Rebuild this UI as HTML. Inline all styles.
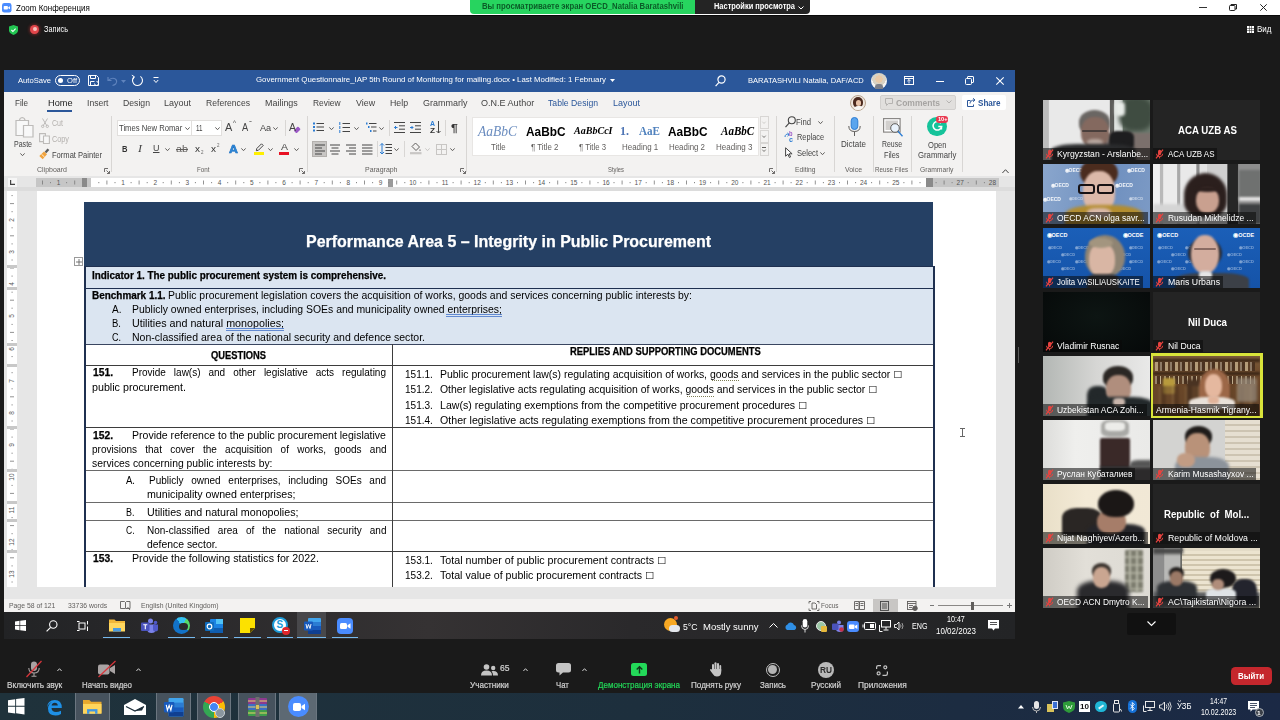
<!DOCTYPE html>
<html lang="ru">
<head>
<meta charset="utf-8">
<title>Zoom Конференция</title>
<style>
*{margin:0;padding:0;box-sizing:border-box}
html,body{width:1280px;height:720px;overflow:hidden;background:#1a1a1a}
body{font-family:"Liberation Sans",sans-serif;font-size:10px;color:#000;position:relative}
.a{position:absolute;white-space:pre}
.t{position:absolute;white-space:pre;line-height:14px;height:14px;transform-origin:0 50%}
.b{font-weight:bold}
svg{position:absolute;overflow:visible}
.bb{-webkit-text-stroke:.25px currentColor}
.cb{font-family:"DejaVu Sans",sans-serif;font-size:9.500px;line-height:0;position:relative;top:-.5px}
/* zoom chrome */
#ztitle{left:0;top:0;width:1280px;height:15px;background:#fff}
#zline{left:0;top:15px;width:1280px;height:1px;background:#0a0a0a}
#zgreen{left:470px;top:0;width:226px;height:14px;background:#27d45f;border-radius:0 0 0 4px}
#zdark{left:695px;top:0;width:115px;height:14px;background:#242424;border-radius:0 0 4px 0}
/* word window (global coords) */
#wtitle{left:4px;top:70px;width:1011px;height:22px;background:#2b579a}
#wtabs{left:4px;top:92px;width:1011px;height:21px;background:#f3f2f1}
#wribbon{left:4px;top:113px;width:1011px;height:63px;background:#f3f2f1}
#wruler{left:4px;top:176px;width:1011px;height:15px;background:#e6e6e6}
#wdoc{left:4px;top:191px;width:1011px;height:408px;background:#e6e6e6}
#wpage{left:37px;top:191px;width:959px;height:396px;background:#fff}
#wstatus{left:4px;top:599px;width:1011px;height:13px;background:#f3f2f1}
#wtask{left:4px;top:612px;width:1011px;height:27px;background:linear-gradient(90deg,#222325 0,#2b2a2c 20%,#353233 42%,#2a292b 62%,#232426 100%)}
/* bottom */
#ztool{left:0;top:645px;width:1280px;height:48px;background:#1a1a1a}
#wintask{left:0;top:692.500px;width:1280px;height:28px;background:linear-gradient(90deg,#1f323b 0,#1d2f3d 50%,#1b2945 100%)}
</style>
</head>
<body>
<!-- ZOOM TITLE BAR -->
<div class="a" id="ztitle"></div>
<div class="a" id="zline"></div>
<div class="a" id="zgreen"></div>
<div class="a" id="zdark"></div>
<!-- ztitle -->
<svg style="left:2px;top:3px" width="9.500" height="9.500" viewBox="0 0 10 10"><rect width="10" height="10" rx="2.500" fill="#4a8cff"/><rect x="1.800" y="3.200" width="4.400" height="3.600" rx=".8" fill="#fff"/><path d="M6.600 4.600l1.800-1.200v3.200L6.600 5.400z" fill="#fff"/></svg>
<svg style="left:798px;top:5.500px" width="6" height="4" viewBox="0 0 6 4" fill="none" stroke="#fff" stroke-width="1"><path d="M.500.500l2.500 2.500L5.500.500"/></svg>
<div class="a" style="left:1198.500px;top:6.500px;width:8px;height:1px;background:#333"></div>
<svg style="left:1229px;top:3.500px" width="8" height="7" viewBox="0 0 8 7" fill="none" stroke="#222" stroke-width="1"><rect x=".5" y="1.500" width="5.500" height="5" rx=".8"/><path d="M2 1.500v-1h5.500v4.500h-1.500"/></svg>
<svg style="left:1260px;top:3.500px" width="7" height="7" viewBox="0 0 7 7" stroke="#222" stroke-width="1"><path d="M.300.300l6.400 6.400M6.700.300L.300 6.700"/></svg>
<svg style="left:9px;top:24.500px" width="9" height="10" viewBox="0 0 9 10"><path d="M4.500 0L9 1.500v3.800Q9 8.200 4.500 10 0 8.200 0 5.300V1.500z" fill="#23c552"/><path d="M2.400 5l1.500 1.500L6.600 3.600" stroke="#fff" stroke-width="1.100" fill="none"/></svg>
<div class="a" style="left:30px;top:24.500px;width:9px;height:9px;border-radius:5px;background:#e2464b;box-shadow:0 0 3px 1px rgba(200,50,50,.45)"></div>
<div class="a" style="left:32.500px;top:27px;width:4px;height:4px;border-radius:2px;background:#f6c0bd"></div>
<svg style="left:1247px;top:25.500px" width="7" height="7" viewBox="0 0 7 7" fill="#fff"><path d="M0 0h2v2H0zM2.500 0h2v2h-2zM5 0h2v2H5zM0 2.500h2v2H0zM2.500 2.500h2v2h-2zM5 2.500h2v2H5zM0 5h2v2H0zM2.500 5h2v2h-2zM5 5h2v2H5z"/></svg>
<div class="t" style="left:15.5px;top:0.8px;font-size:9.6px;transform:scaleX(0.8323);color:#000;">Zoom Конференция</div>
<div class="t b" style="left:481.5px;top:0.0px;font-size:8.2px;transform:scaleX(0.9459);color:#0b5c27;">Вы просматриваете экран OECD_Natalia Baratashvili</div>
<div class="t b" style="left:714px;top:0.0px;font-size:8.2px;transform:scaleX(0.9082);color:#fff;">Настройки просмотра</div>
<div class="t" style="left:44px;top:22.0px;font-size:8.4px;transform:scaleX(0.8732);color:#fff;">Запись</div>
<div class="t" style="left:1257px;top:22.0px;font-size:8.4px;transform:scaleX(0.9567);color:#fff;">Вид</div>

<!-- WORD WINDOW (shared screen) -->
<div class="a" id="wtitle"></div>
<div class="a" id="wtabs"></div>
<div class="a" id="wribbon"></div>
<div class="a" id="wruler"></div>
<div class="a" id="wdoc"></div>
<div class="a" id="wpage"></div>
<!-- wtitle -->
<div class="t" style="left:18px;top:73.5px;font-size:8px;transform:scaleX(0.9509);color:#fff;">AutoSave</div>
<div class="t" style="left:66.5px;top:73.5px;font-size:6.5px;transform:scaleX(1.1679);color:#fff;">Off</div>
<div class="t" style="left:255.6px;top:73.3px;font-size:8px;transform:scaleX(0.9802);color:#fff;">Government Questionnaire_IAP 5th Round of Monitoring for mailing.docx • Last Modified: 1 February</div>
<div class="t" style="left:748px;top:74.0px;font-size:8px;transform:scaleX(0.9425);color:#fff;">BARATASHVILI Natalia, DAF/ACD</div>
<div class="a" style="left:55px;top:75px;width:25px;height:11px;border:1px solid #fff;border-radius:6px"></div>
<div class="a" style="left:58px;top:78px;width:5px;height:5px;border-radius:3px;background:#fff"></div>
<svg style="left:88px;top:75px" width="11" height="11" viewBox="0 0 11 11" fill="none" stroke="#fff" stroke-width="1"><path d="M.5.5h8l2 2v8h-10z"/><path d="M2.5.5v3h5v-3M2.5 10.500v-4h4"/><path d="M6.500 8.500a2 2 0 1 0 2-2" stroke-width=".9"/></svg>
<svg style="left:107px;top:76px" width="11" height="10" viewBox="0 0 11 10" fill="none" stroke="#5f83bd" stroke-width="1.2"><path d="M1 1v3.500h3.500M1.500 4.500c2-3 7-3 8 0s-2 4.500-4 5"/></svg>
<svg style="left:121px;top:80px" width="5" height="3" viewBox="0 0 5 3"><path d="M0 0h5l-2.500 3z" fill="#5f83bd"/></svg>
<svg style="left:131px;top:74px" width="13" height="13" viewBox="0 0 13 13" fill="none" stroke="#fff" stroke-width="1.1"><path d="M3.200 2.700a5 5 0 1 0 6.200-.3"/><path d="M.800 1.200l2.500 1.500-1.300 2.600" stroke-width="1"/></svg>
<svg style="left:153px;top:77px" width="6" height="7" viewBox="0 0 6 7" fill="none" stroke="#fff" stroke-width="1"><path d="M.500.500h5M.800 3l2.200 2.500L5.200 3"/></svg>
<svg style="left:610px;top:79px" width="5" height="3" viewBox="0 0 5 3"><path d="M0 0h5l-2.500 3z" fill="#fff"/></svg>
<svg style="left:715px;top:75px" width="11" height="12" viewBox="0 0 11 12" fill="none" stroke="#fff" stroke-width="1.2"><circle cx="6.500" cy="4.500" r="3.600"/><path d="M4 7.300L.600 11.200"/></svg>
<div class="a" style="left:871px;top:73px;width:16px;height:16px;border-radius:8px;background:radial-gradient(circle at 50% 38%,#e8c9a8 0 28%,#d8d2c4 30% 52%,#f4f4f4 54%);"></div>
<div class="a" style="left:875px;top:84px;width:8px;height:5px;border-radius:3px 3px 0 0;background:#7b7f8a"></div>
<svg style="left:904px;top:76px" width="10" height="9" viewBox="0 0 10 9" fill="none" stroke="#fff" stroke-width="1"><rect x=".5" y=".5" width="9" height="8"/><path d="M.5 2.500h9"/><path d="M5 3.500v4M3.300 5.200L5 3.500l1.700 1.700" stroke-width=".9"/></svg>
<div class="a" style="left:936px;top:81px;width:8px;height:1px;background:#fff"></div>
<svg style="left:965px;top:76px" width="9" height="9" viewBox="0 0 9 9" fill="none" stroke="#fff" stroke-width="1"><rect x=".5" y="2.500" width="6" height="6" rx="1"/><path d="M2.500 2.500v-1.500q0-.5.5-.5h5q.5 0 .5.500v5q0 .5-.5.500h-1.500"/></svg>
<svg style="left:996px;top:77px" width="8" height="8" viewBox="0 0 8 8" stroke="#fff" stroke-width="1.1"><path d="M.300.300l7.400 7.400M7.700.300L.300 7.700"/></svg>

<!-- wtabs -->
<div class="a" style="left:47px;top:110px;width:25px;height:2px;background:#2b579a"></div>
<div class="a" style="left:880px;top:95px;width:76px;height:15px;background:#e1dfdd;border:1px solid #d2d0ce;border-radius:2px"></div>
<div class="a" style="left:962px;top:95px;width:44px;height:15px;background:#fff;border-radius:2px"></div>
<svg style="left:885px;top:98px" width="8" height="8" viewBox="0 0 8 8" fill="none" stroke="#b5b3b1" stroke-width="1"><path d="M.5.500h7v5h-4l-2 2v-2h-1z"/></svg>
<svg style="left:946px;top:100px" width="6" height="4" viewBox="0 0 6 4" fill="none" stroke="#b5b3b1" stroke-width="1"><path d="M.500.500l2.500 2.500L5.500.500"/></svg>
<svg style="left:967px;top:98px" width="9" height="9" viewBox="0 0 9 9" fill="none" stroke="#2b579a" stroke-width="1"><path d="M3.500 2.500h-3v6h6v-2M3 5.500c0-2 1.500-3.500 4.500-3.500M6 .300l2 1.700-2 1.700"/></svg>
<div class="a" style="left:850px;top:95px;width:16px;height:16px;border-radius:8px;background:#efe7de;border:1px solid #b9a58f;overflow:hidden"><div class="a" style="left:2px;top:1px;width:10px;height:11px;border-radius:5px;background:#4b2a1e"></div><div class="a" style="left:5px;top:3.500px;width:5px;height:6px;border-radius:3px;background:#e7c2a8"></div><div class="a" style="left:2.500px;top:10px;width:10px;height:6px;border-radius:4px 4px 0 0;background:#f7f5f2"></div></div>
<div class="t" style="left:15px;top:95.5px;font-size:9.4px;transform:scaleX(0.8604);color:#444;">File</div>
<div class="t" style="left:47.5px;top:95.5px;font-size:9.4px;transform:scaleX(0.9794);color:#222;">Home</div>
<div class="t" style="left:86.5px;top:95.5px;font-size:9.4px;transform:scaleX(0.9167);color:#444;">Insert</div>
<div class="t" style="left:123px;top:95.5px;font-size:9.4px;transform:scaleX(0.9251);color:#444;">Design</div>
<div class="t" style="left:164px;top:95.5px;font-size:9.4px;transform:scaleX(0.9589);color:#444;">Layout</div>
<div class="t" style="left:206px;top:95.5px;font-size:9.4px;transform:scaleX(0.9176);color:#444;">References</div>
<div class="t" style="left:265px;top:95.5px;font-size:9.4px;transform:scaleX(0.9537);color:#444;">Mailings</div>
<div class="t" style="left:313px;top:95.5px;font-size:9.4px;transform:scaleX(0.8976);color:#444;">Review</div>
<div class="t" style="left:355.6px;top:95.5px;font-size:9.4px;transform:scaleX(0.9476);color:#444;">View</div>
<div class="t" style="left:389.7px;top:95.5px;font-size:9.4px;transform:scaleX(0.9387);color:#444;">Help</div>
<div class="t" style="left:422.5px;top:95.5px;font-size:9.4px;transform:scaleX(0.9577);color:#444;">Grammarly</div>
<div class="t" style="left:480.6px;top:95.5px;font-size:9.4px;transform:scaleX(0.9632);color:#444;">O.N.E Author</div>
<div class="t" style="left:548px;top:95.5px;font-size:9.4px;transform:scaleX(0.9225);color:#2b579a;">Table Design</div>
<div class="t" style="left:613px;top:95.5px;font-size:9.4px;transform:scaleX(0.9589);color:#2b579a;">Layout</div>
<div class="t b" style="left:896px;top:95.5px;font-size:9.5px;transform:scaleX(0.8962);color:#a6a4a2;">Comments</div>
<div class="t b" style="left:978px;top:95.5px;font-size:9.5px;transform:scaleX(0.8521);color:#2b579a;">Share</div>

<!-- wribbon -->
<svg style="left:15px;top:117px" width="19" height="21" viewBox="0 0 19 21" fill="#f8f8f8" stroke="#bdbbb9" stroke-width="1.2"><path d="M1 3.500h12.500v15H1z"/><path d="M4.500 3.500q0-2.500 2.700-3 2.800.5 2.800 3z" fill="#f3f2f1"/><path d="M8.500 8.500h9.500v11.500H8.500z"/></svg>
<svg style="left:20.0px;top:152.5px" width="5" height="3.500" viewBox="0 0 5 3.500" fill="none" stroke="#605e5c" stroke-width="1"><path d="M.400.400l2.100 2.300L4.600.400"/></svg>
<svg style="left:41px;top:118px" width="8" height="10" viewBox="0 0 8 10" fill="none" stroke="#bdbbb9" stroke-width="1"><path d="M1.500.500L6 8M6.500.500L2 8"/><circle cx="1.700" cy="8.300" r="1.200"/><circle cx="6.300" cy="8.300" r="1.200"/></svg>
<svg style="left:39px;top:133px" width="11" height="11" viewBox="0 0 11 11" fill="#f6f6f6" stroke="#bdbbb9" stroke-width="1.100"><path d="M.600.600h5.800v8H.600z"/><path d="M4.500 3h5.900v7.500H4.500z"/></svg>
<svg style="left:39px;top:148px" width="11" height="12" viewBox="0 0 11 12"><path d="M8.500.500l1.800 1.600-3 3.200-1.600-1.500z" fill="#5c5c5c"/><path d="M5 3.500l3 2.800-4.300 5L.300 8z" fill="#f0a33e"/><path d="M2.500 6.200l3 2.800" stroke="#fff" stroke-width=".8"/></svg>
<svg style="left:104px;top:168px" width="6" height="6" viewBox="0 0 6 6" fill="none" stroke="#605e5c" stroke-width=".9"><path d="M.500 4v-3.500h3.500M2.500 2.500l3 3M5.500 3v2.500h-2.500"/></svg>
<div class="a" style="left:111px;top:116px;width:1px;height:56px;background:#d8d6d4"></div>
<div class="a" style="left:117px;top:120px;width:75px;height:16px;background:#fff;border:1px solid #e1dfdd"></div>
<div class="a" style="left:192px;top:120px;width:30px;height:16px;background:#fff;border:1px solid #e1dfdd;border-left:0"></div>
<svg style="left:184.5px;top:127.0px" width="5" height="3.500" viewBox="0 0 5 3.500" fill="none" stroke="#605e5c" stroke-width="1"><path d="M.400.400l2.100 2.300L4.600.400"/></svg>
<svg style="left:214.5px;top:127.0px" width="5" height="3.500" viewBox="0 0 5 3.500" fill="none" stroke="#605e5c" stroke-width="1"><path d="M.400.400l2.100 2.300L4.600.400"/></svg>
<svg style="left:164.5px;top:147.5px" width="5" height="3.500" viewBox="0 0 5 3.500" fill="none" stroke="#605e5c" stroke-width="1"><path d="M.400.400l2.100 2.300L4.600.400"/></svg>
<svg style="left:272.5px;top:127.0px" width="5" height="3.500" viewBox="0 0 5 3.500" fill="none" stroke="#605e5c" stroke-width="1"><path d="M.400.400l2.100 2.300L4.600.400"/></svg>
<div class="a" style="left:284.6px;top:120px;width:1px;height:16px;background:#d8d6d4"></div>
<div class="a" style="left:294px;top:128px;width:6px;height:3.500px;background:#9b59c6;transform:rotate(-45deg);border-radius:1px"></div>
<svg style="left:240.5px;top:147.5px" width="5" height="3.500" viewBox="0 0 5 3.500" fill="none" stroke="#605e5c" stroke-width="1"><path d="M.400.400l2.100 2.300L4.600.400"/></svg>
<svg style="left:267.5px;top:147.5px" width="5" height="3.500" viewBox="0 0 5 3.500" fill="none" stroke="#605e5c" stroke-width="1"><path d="M.400.400l2.100 2.300L4.600.400"/></svg>
<svg style="left:293.5px;top:147.5px" width="5" height="3.500" viewBox="0 0 5 3.500" fill="none" stroke="#605e5c" stroke-width="1"><path d="M.400.400l2.100 2.300L4.600.400"/></svg>
<div class="a" style="left:253.5px;top:151.500px;width:10.500px;height:3.500px;background:#ffef00"></div>
<svg style="left:255px;top:143px" width="9" height="9" viewBox="0 0 9 9" fill="none" stroke="#444" stroke-width="1"><path d="M6.500.800l1.700 1.700-4.700 4.700-2.200.500.500-2.200z"/></svg>
<div class="a" style="left:279px;top:151.500px;width:10px;height:3px;background:#e81123"></div>
<svg style="left:299px;top:168px" width="6" height="6" viewBox="0 0 6 6" fill="none" stroke="#605e5c" stroke-width=".9"><path d="M.500 4v-3.500h3.500M2.500 2.500l3 3M5.500 3v2.500h-2.500"/></svg>
<div class="a" style="left:306.5px;top:116px;width:1px;height:56px;background:#d8d6d4"></div>
<svg style="left:313.3px;top:122.3px" width="11" height="10" viewBox="0 0 11 10"><path d="M0 .5h2v2H0zM0 4h2v2H0zM0 7.500h2v2H0z" fill="#2b7cd3"/><path d="M3.500 1.500H11M3.500 5H11M3.500 8.500H11" stroke="#444" stroke-width="1"/></svg>
<svg style="left:328.5px;top:126.5px" width="5" height="3.500" viewBox="0 0 5 3.500" fill="none" stroke="#605e5c" stroke-width="1"><path d="M.400.400l2.100 2.300L4.600.400"/></svg>
<svg style="left:339px;top:122px" width="11" height="11" viewBox="0 0 11 11"><path d="M.8 0v3M.8 4v3M.8 8v3" stroke="#2b7cd3" stroke-width="1"/><path d="M3.500 1.500H11M3.500 5.500H11M3.500 9.500H11" stroke="#444" stroke-width="1"/></svg>
<svg style="left:354.0px;top:126.5px" width="5" height="3.500" viewBox="0 0 5 3.500" fill="none" stroke="#605e5c" stroke-width="1"><path d="M.400.400l2.100 2.300L4.600.400"/></svg>
<svg style="left:365.500px;top:122px" width="11" height="11" viewBox="0 0 11 11"><path d="M0 .5h1.500v2H0zM2 4h1.500v2H2zM4 8h1.500v2H4z" fill="#2b7cd3"/><path d="M3 1.500H10.500M5 5H10.500M7 9H10.500" stroke="#444" stroke-width="1"/></svg>
<svg style="left:378.5px;top:126.5px" width="5" height="3.500" viewBox="0 0 5 3.500" fill="none" stroke="#605e5c" stroke-width="1"><path d="M.400.400l2.100 2.300L4.600.400"/></svg>
<div class="a" style="left:389px;top:120px;width:1px;height:16px;background:#d8d6d4"></div>
<svg style="left:394.300px;top:122px" width="11" height="11" viewBox="0 0 11 11"><path d="M0 .5H11M5 3.800H11M5 7.200H11M0 10.500H11" stroke="#444" stroke-width="1"/><path d="M3.500 5.500H.500M2 4L.5 5.500 2 7" stroke="#2b7cd3" fill="none" stroke-width="1"/></svg>
<svg style="left:410px;top:122px" width="11" height="11" viewBox="0 0 11 11"><path d="M0 .5H11M5 3.800H11M5 7.200H11M0 10.500H11" stroke="#444" stroke-width="1"/><path d="M0 5.500H3M1.500 4L3 5.500 1.500 7" stroke="#2b7cd3" fill="none" stroke-width="1"/></svg>
<svg style="left:436px;top:120.500px" width="5" height="13" viewBox="0 0 5 13" fill="none" stroke="#444" stroke-width="1"><path d="M2.500 0v12M.500 10l2 2 2-2"/></svg>
<div class="a" style="left:445px;top:120px;width:1px;height:16px;background:#d8d6d4"></div>
<div class="a" style="left:312px;top:141px;width:15px;height:16px;background:#c8c6c4;border:1px solid #b3b0ad"></div>
<svg style="left:314.5px;top:143.5px" width="14" height="12" viewBox="0 0 14 12" fill="none" stroke="#444" stroke-width="1"><path d="M0 1H10M0 4H7M0 7H10M0 10H7"/></svg>
<svg style="left:330px;top:143.5px" width="14" height="12" viewBox="0 0 14 12" fill="none" stroke="#444" stroke-width="1"><path d="M0 1H10M1.5 4H8.5M0 7H10M1.5 10H8.5"/></svg>
<svg style="left:346px;top:143.5px" width="14" height="12" viewBox="0 0 14 12" fill="none" stroke="#444" stroke-width="1"><path d="M0 1H10M3 4H10M0 7H10M3 10H10"/></svg>
<svg style="left:361.5px;top:143.5px" width="14" height="12" viewBox="0 0 14 12" fill="none" stroke="#444" stroke-width="1"><path d="M0 1H10.5M0 4H10.5M0 7H10.5M0 10H10.5"/></svg>
<div class="a" style="left:377px;top:141px;width:1px;height:16px;background:#d8d6d4"></div>
<svg style="left:380px;top:143px" width="12" height="12" viewBox="0 0 12 12" fill="none"><path d="M2 .5v10.500M0 2.500l2-2 2 2M0 9l2 2 2-2" stroke="#2b7cd3" stroke-width="1"/><path d="M5.500 1.500H12M5.500 4.500H12M5.500 7.500H12M5.500 10.500H12" stroke="#444" stroke-width="1"/></svg>
<svg style="left:393.5px;top:147.5px" width="5" height="3.500" viewBox="0 0 5 3.500" fill="none" stroke="#605e5c" stroke-width="1"><path d="M.400.400l2.100 2.300L4.600.400"/></svg>
<div class="a" style="left:404px;top:141px;width:1px;height:16px;background:#d8d6d4"></div>
<svg style="left:409.500px;top:142px" width="12" height="13" viewBox="0 0 12 13" fill="none"><path d="M5.500 1l4 4-3.500 3.500-4-4z" stroke="#605e5c" stroke-width="1" fill="#f3f2f1"/><path d="M10 7q1.200 1.600 0 2.200-1.200-.6 0-2.200z" fill="#605e5c"/><path d="M0 11.200h11.500" stroke="#c8c6c4" stroke-width="2.200"/></svg>
<svg style="left:424.5px;top:147.5px" width="5" height="3.500" viewBox="0 0 5 3.500" fill="none" stroke="#c8c6c4" stroke-width="1"><path d="M.400.400l2.100 2.300L4.600.400"/></svg>
<svg style="left:435.500px;top:143.500px" width="11" height="11" viewBox="0 0 11 11" fill="none" stroke="#c8c6c4" stroke-width="1"><rect x=".5" y=".5" width="10" height="10"/><path d="M5.500.500v10M.500 5.500h10"/></svg>
<svg style="left:450.0px;top:147.5px" width="5" height="3.500" viewBox="0 0 5 3.500" fill="none" stroke="#605e5c" stroke-width="1"><path d="M.400.400l2.100 2.300L4.600.400"/></svg>
<svg style="left:460px;top:168px" width="6" height="6" viewBox="0 0 6 6" fill="none" stroke="#605e5c" stroke-width=".9"><path d="M.500 4v-3.500h3.500M2.500 2.500l3 3M5.500 3v2.500h-2.500"/></svg>
<div class="a" style="left:466.3px;top:116px;width:1px;height:56px;background:#d8d6d4"></div>
<div class="a" style="left:472px;top:117px;width:287px;height:38.500px;background:#fff;border:1px solid #e8e6e4"></div>
<div class="a" style="left:759.500px;top:116px;width:9px;height:13px;background:#f3f2f1;border:1px solid #d8d6d4"></div>
<div class="a" style="left:759.500px;top:129.5px;width:9px;height:13px;background:#f3f2f1;border:1px solid #d8d6d4"></div>
<div class="a" style="left:759.500px;top:143px;width:9px;height:13px;background:#f3f2f1;border:1px solid #d8d6d4"></div>
<svg style="left:762.0px;top:121.0px" width="4" height="3.500" viewBox="0 0 5 3.500" fill="none" stroke="#c8c6c4" stroke-width="1"><path d="M.400.400l2.100 2.300L4.600.400"/></svg>
<svg style="left:762.0px;top:134.5px" width="4" height="3.500" viewBox="0 0 5 3.500" fill="none" stroke="#605e5c" stroke-width="1"><path d="M.400.400l2.100 2.300L4.600.400"/></svg>
<svg style="left:762.0px;top:149.0px" width="4" height="3.500" viewBox="0 0 5 3.500" fill="none" stroke="#605e5c" stroke-width="1"><path d="M.400.400l2.100 2.300L4.600.400"/></svg>
<div class="a" style="left:762px;top:146.500px;width:4px;height:1px;background:#605e5c"></div>
<svg style="left:769px;top:168px" width="6" height="6" viewBox="0 0 6 6" fill="none" stroke="#605e5c" stroke-width=".9"><path d="M.500 4v-3.500h3.500M2.500 2.500l3 3M5.500 3v2.500h-2.500"/></svg>
<div class="a" style="left:775.8px;top:116px;width:1px;height:56px;background:#d8d6d4"></div>
<svg style="left:784.500px;top:116px" width="11" height="12" viewBox="0 0 11 12" fill="none" stroke="#444" stroke-width="1.100"><circle cx="6.800" cy="4.200" r="3.500"/><path d="M4.300 6.900L.500 11.200"/></svg>
<svg style="left:817.5px;top:121.0px" width="5" height="3.500" viewBox="0 0 5 3.500" fill="none" stroke="#605e5c" stroke-width="1"><path d="M.400.400l2.100 2.300L4.600.400"/></svg>
<svg style="left:820.0px;top:151.5px" width="5" height="3.500" viewBox="0 0 5 3.500" fill="none" stroke="#605e5c" stroke-width="1"><path d="M.400.400l2.100 2.300L4.600.400"/></svg>
<svg style="left:784px;top:132px" width="11" height="11" viewBox="0 0 11 11" fill="none"><path d="M1 5c0-2.500 2-3.500 4-2.500M3.500 1l1.700 1.600-1.700 1.600" stroke="#2b7cd3" stroke-width="1"/></svg>
<svg style="left:785px;top:147px" width="8" height="11" viewBox="0 0 8 11" fill="#fff" stroke="#444" stroke-width="1"><path d="M.600.800v8.400l2.300-2 1.500 3.300 1.200-.6-1.500-3.100h3z"/></svg>
<div class="a" style="left:834px;top:116px;width:1px;height:56px;background:#d8d6d4"></div>
<svg style="left:847.500px;top:117px" width="13" height="20" viewBox="0 0 13 20" fill="none"><rect x="3.200" y=".5" width="6.600" height="12" rx="3.300" fill="#5aa5ee" stroke="#2b7cd3" stroke-width="1"/><path d="M.800 9q0 5.500 5.700 5.500T12.200 9M6.500 14.500v4.500" stroke="#605e5c" stroke-width="1"/></svg>
<div class="a" style="left:872.5px;top:116px;width:1px;height:56px;background:#d8d6d4"></div>
<svg style="left:882.500px;top:118px" width="21" height="20" viewBox="0 0 21 20" fill="none"><rect x=".6" y=".6" width="16.500" height="13.500" stroke="#8a8886" stroke-width="1.200" fill="#fff"/><rect x="2.500" y="2.500" width="12.500" height="9.500" fill="#d2d0ce"/><circle cx="12" cy="10" r="4.300" fill="#eaf3fc" stroke="#605e5c" stroke-width="1"/><path d="M15 13.300l4.500 5" stroke="#2b7cd3" stroke-width="1.300"/></svg>
<div class="a" style="left:911px;top:116px;width:1px;height:56px;background:#d8d6d4"></div>
<div class="a" style="left:927px;top:116.500px;width:19.500px;height:19.500px;border-radius:10px;background:#15c39a"></div>
<svg style="left:930.500px;top:120px" width="12" height="12" viewBox="0 0 12 12" fill="none" stroke="#fff" stroke-width="1.500"><path d="M9.800 3.200a4.300 4.300 0 1 0 .8 3.300h-3.300"/><path d="M10.600 6.500v3" stroke-width="1.200"/></svg>
<div class="a" style="left:936px;top:116px;width:12px;height:6.500px;border-radius:3px;background:#e8384f"></div>
<div class="a" style="left:962.4px;top:116px;width:1px;height:56px;background:#d8d6d4"></div>
<svg style="left:1002px;top:168.500px" width="7" height="4.500" viewBox="0 0 7 4.500" fill="none" stroke="#444" stroke-width="1"><path d="M.400 4l3.100-3.300L6.600 4"/></svg>
<div class="t" style="left:14px;top:137.0px;font-size:8.8px;transform:scaleX(0.8000);color:#444;">Paste</div>
<div class="t" style="left:52px;top:116.0px;font-size:8.8px;transform:scaleX(0.8027);color:#b3b0ad;">Cut</div>
<div class="t" style="left:52px;top:132.0px;font-size:8.8px;transform:scaleX(0.8274);color:#b3b0ad;">Copy</div>
<div class="t" style="left:52px;top:147.8px;font-size:8.8px;transform:scaleX(0.8593);color:#444;">Format Painter</div>
<div class="t" style="left:37px;top:163.3px;font-size:7.6px;transform:scaleX(0.9226);color:#605e5c;">Clipboard</div>
<div class="t" style="left:119.2px;top:121.3px;font-size:8.8px;transform:scaleX(0.8715);color:#444;">Times New Romar</div>
<div class="t" style="left:195.5px;top:121.3px;font-size:8.8px;transform:scaleX(0.7111);color:#444;">11</div>
<div class="t b" style="left:122px;top:141.7px;font-size:9.5px;transform:scaleX(0.8000);color:#333;">B</div>
<div class="t" style="left:138px;top:141.7px;font-size:9.5px;transform:scaleX(1.2611);color:#444;font-style:italic;font-family:'Liberation Serif',sans-serif;">I</div>
<div class="t" style="left:152.5px;top:141.3px;font-size:9.5px;transform:scaleX(0.9455);color:#444;text-decoration:underline;">U</div>
<div class="t" style="left:176px;top:141.7px;font-size:8.5px;transform:scaleX(1.2673);color:#605e5c;text-decoration:line-through;">ab</div>
<div class="t" style="left:195px;top:141.7px;font-size:9.5px;transform:scaleX(1.0526);color:#333;">x</div>
<div class="t" style="left:200.5px;top:145.0px;font-size:5px;transform:scaleX(0.8989);color:#666;">2</div>
<div class="t" style="left:211px;top:141.7px;font-size:9.5px;transform:scaleX(1.0526);color:#333;">x</div>
<div class="t" style="left:216.5px;top:137.5px;font-size:5px;transform:scaleX(0.8989);color:#666;">2</div>
<div class="t" style="left:225.2px;top:120.0px;font-size:11.5px;transform:scaleX(0.9515);color:#444;">A</div>
<div class="t" style="left:233px;top:116.0px;font-size:6.5px;transform:scaleX(0.9796);color:#444;">^</div>
<div class="t" style="left:242.3px;top:120.5px;font-size:10px;transform:scaleX(0.9293);color:#444;">A</div>
<div class="t" style="left:249px;top:117.0px;font-size:8px;transform:scaleX(1.1228);color:#444;">ˇ</div>
<div class="t" style="left:260.3px;top:121.0px;font-size:9.5px;transform:scaleX(0.9634);color:#444;">Aa</div>
<div class="t" style="left:289px;top:120.0px;font-size:11.5px;transform:scaleX(0.9124);color:#444;">A</div>
<div class="t b" style="left:228.6px;top:141.5px;font-size:11.5px;transform:scaleX(1.0707);color:#2f8ad8;-webkit-text-stroke:.6px #1b6fc2;">A</div>
<div class="t" style="left:281px;top:140.0px;font-size:9.5px;transform:scaleX(1.1034);color:#444;">A</div>
<div class="t" style="left:197px;top:163.4px;font-size:7.6px;transform:scaleX(0.8222);color:#605e5c;">Font</div>
<div class="t b" style="left:429.5px;top:116.5px;font-size:7px;transform:scaleX(0.9877);color:#2b7cd3;">A</div>
<div class="t b" style="left:429.5px;top:124.0px;font-size:7px;transform:scaleX(1.1679);color:#333;">Z</div>
<div class="t b" style="left:450.7px;top:120.5px;font-size:11px;transform:scaleX(1.1102);color:#333;">¶</div>
<div class="t" style="left:365px;top:163.4px;font-size:7.6px;transform:scaleX(0.9163);color:#605e5c;">Paragraph</div>
<div class="t" style="left:478px;top:124.3px;font-size:15.5px;transform:scaleX(0.8709);color:#6a8cbf;font-style:italic;font-family:'Liberation Serif',sans-serif;">AaBbC</div>
<div class="t b" style="left:525.5px;top:124.5px;font-size:13px;transform:scaleX(0.9113);color:#000;">AaBbC</div>
<div class="t b" style="left:573.5px;top:124.0px;font-size:10.5px;transform:scaleX(0.9562);color:#000;font-style:italic;font-family:'Liberation Serif',sans-serif;">AaBbCcI</div>
<div class="t b" style="left:620px;top:124.3px;font-size:13.5px;transform:scaleX(0.8889);color:#4f76b5;font-family:'Liberation Serif',sans-serif;">1.</div>
<div class="t b" style="left:639px;top:124.3px;font-size:13.5px;transform:scaleX(0.8230);color:#4f81bd;font-family:'Liberation Serif',sans-serif;">AaE</div>
<div class="t b" style="left:667.5px;top:124.5px;font-size:13px;transform:scaleX(0.9113);color:#000;">AaBbC</div>
<div class="t b" style="left:720.8px;top:124.0px;font-size:11.5px;transform:scaleX(0.9619);color:#000;font-style:italic;font-family:'Liberation Serif',sans-serif;">AaBbC</div>
<div class="t" style="left:490.5px;top:139.5px;font-size:8.3px;transform:scaleX(0.9431);color:#605e5c;">Title</div>
<div class="t" style="left:531px;top:139.5px;font-size:8.3px;transform:scaleX(0.9514);color:#605e5c;">¶ Title 2</div>
<div class="t" style="left:579px;top:139.5px;font-size:8.3px;transform:scaleX(0.9341);color:#605e5c;">¶ Title 3</div>
<div class="t" style="left:621.8px;top:139.5px;font-size:8.3px;transform:scaleX(0.9570);color:#605e5c;">Heading 1</div>
<div class="t" style="left:669px;top:139.5px;font-size:8.3px;transform:scaleX(0.9517);color:#605e5c;">Heading 2</div>
<div class="t" style="left:716px;top:139.5px;font-size:8.3px;transform:scaleX(0.9649);color:#605e5c;">Heading 3</div>
<div class="t" style="left:608px;top:163.4px;font-size:7.6px;transform:scaleX(0.7734);color:#605e5c;">Styles</div>
<div class="t" style="left:796px;top:115.3px;font-size:8.8px;transform:scaleX(0.8759);color:#444;">Find</div>
<div class="t" style="left:797px;top:130.3px;font-size:8.8px;transform:scaleX(0.8364);color:#444;">Replace</div>
<div class="t" style="left:797px;top:145.7px;font-size:8.8px;transform:scaleX(0.8588);color:#444;">Select</div>
<div class="t" style="left:794.5px;top:163.4px;font-size:7.6px;transform:scaleX(0.8823);color:#605e5c;">Editing</div>
<div class="t b" style="left:788.5px;top:126.5px;font-size:6.5px;transform:scaleX(0.8784);color:#9b59c6;">b</div>
<div class="t b" style="left:789px;top:133.0px;font-size:6.5px;transform:scaleX(1.1034);color:#2b7cd3;">c</div>
<div class="t" style="left:841px;top:136.8px;font-size:8.8px;transform:scaleX(0.9127);color:#444;">Dictate</div>
<div class="t" style="left:845px;top:163.4px;font-size:7.6px;transform:scaleX(0.9151);color:#605e5c;">Voice</div>
<div class="t" style="left:882px;top:136.8px;font-size:8.8px;transform:scaleX(0.7862);color:#444;">Reuse</div>
<div class="t" style="left:884px;top:147.5px;font-size:8.8px;transform:scaleX(0.8343);color:#444;">Files</div>
<div class="t" style="left:875px;top:163.4px;font-size:7.6px;transform:scaleX(0.8231);color:#605e5c;">Reuse Files</div>
<div class="t b" style="left:937.5px;top:112.3px;font-size:5px;transform:scaleX(1.1197);color:#fff;">10+</div>
<div class="t" style="left:927.5px;top:137.5px;font-size:8.8px;transform:scaleX(0.8592);color:#444;">Open</div>
<div class="t" style="left:917.7px;top:147.7px;font-size:8.8px;transform:scaleX(0.8805);color:#444;">Grammarly</div>
<div class="t" style="left:919.7px;top:163.4px;font-size:7.6px;transform:scaleX(0.8869);color:#605e5c;">Grammarly</div>

<!-- wruler -->
<div class="a" style="left:7px;top:191px;width:10px;height:396px;background:#fff"></div>
<div class="a" style="left:4px;top:187px;width:1011px;height:4px;background:#dcdcdc"></div>
<div class="a" style="left:36px;top:178px;width:963px;height:9px;background:#fff"></div>
<div class="a" style="left:36px;top:178px;width:55px;height:9px;background:#c6c6c6"></div>
<div class="a" style="left:928px;top:178px;width:71px;height:9px;background:#c6c6c6"></div>
<div class="a" style="left:8px;top:178px;width:9px;height:9px;background:#f6f6f6"></div>
<svg style="left:10px;top:180px" width="5" height="5" viewBox="0 0 5 5" fill="none" stroke="#444" stroke-width="1.200"><path d="M.600 0v4.400H5"/></svg>
<div class="a" style="left:82px;top:178px;width:5px;height:9px;background:#8a8a8a"></div>
<div class="a" style="left:388px;top:179px;width:5px;height:8px;background:#9a9a9a"></div>
<div class="a" style="left:926px;top:178px;width:7px;height:9px;background:#8a8a8a"></div>
<svg style="left:0;top:0" width="1280" height="720" viewBox="0 0 1280 720" fill="none"><path d="M42.5 180.500v4M74.7 180.500v4M106.9 180.500v4M139.1 180.500v4M171.3 180.500v4M203.5 180.500v4M235.7 180.500v4M267.9 180.500v4M300.1 180.500v4M332.3 180.500v4M364.5 180.500v4M396.7 180.500v4M428.9 180.500v4M461.1 180.500v4M493.3 180.500v4M525.5 180.500v4M557.7 180.500v4M589.9 180.500v4M622.1 180.500v4M654.3 180.500v4M686.5 180.500v4M718.7 180.500v4M750.9 180.500v4M783.1 180.500v4M815.3 180.500v4M847.5 180.500v4M879.7 180.500v4M911.9 180.500v4M944.1 180.500v4M976.3 180.500v4" stroke="#777" stroke-width=".8"/><path d="M50.5 182v1.200M66.6 182v1.200M82.8 182v1.200M98.8 182v1.200M115.0 182v1.200M131.1 182v1.200M147.2 182v1.200M163.2 182v1.200M179.4 182v1.200M195.4 182v1.200M211.6 182v1.200M227.7 182v1.200M243.8 182v1.200M259.9 182v1.200M275.9 182v1.200M292.1 182v1.200M308.2 182v1.200M324.2 182v1.200M340.4 182v1.200M356.5 182v1.200M372.6 182v1.200M388.7 182v1.200M404.8 182v1.200M420.9 182v1.200M437.0 182v1.200M453.1 182v1.200M469.2 182v1.200M485.3 182v1.200M501.4 182v1.200M517.5 182v1.200M533.6 182v1.200M549.6 182v1.200M565.8 182v1.200M581.9 182v1.200M598.0 182v1.200M614.0 182v1.200M630.1 182v1.200M646.2 182v1.200M662.4 182v1.200M678.5 182v1.200M694.5 182v1.200M710.6 182v1.200M726.8 182v1.200M742.9 182v1.200M759.0 182v1.200M775.1 182v1.200M791.1 182v1.200M807.2 182v1.200M823.4 182v1.200M839.5 182v1.200M855.6 182v1.200M871.6 182v1.200M887.8 182v1.200M903.9 182v1.200M920.0 182v1.200M936.1 182v1.200M952.1 182v1.200M968.2 182v1.200M984.4 182v1.200" stroke="#888" stroke-width="1"/>
<path d="M10 203.6h4M10 235.8h4M10 268.0h4M10 300.2h4M10 332.4h4M10 364.6h4M10 396.8h4M10 429.0h4M10 461.2h4M10 493.4h4M10 525.6h4M10 557.8h4" stroke="#777" stroke-width=".8"/><path d="M11.500 195.6h1.200M11.500 211.7h1.200M11.500 227.8h1.200M11.500 243.9h1.200M11.500 260.0h1.200M11.500 276.1h1.200M11.500 292.2h1.200M11.500 308.2h1.200M11.500 324.4h1.200M11.500 340.5h1.200M11.500 356.6h1.200M11.500 372.7h1.200M11.500 388.8h1.200M11.500 404.9h1.200M11.500 421.0h1.200M11.500 437.1h1.200M11.500 453.2h1.200M11.500 469.3h1.200M11.500 485.4h1.200M11.500 501.5h1.200M11.500 517.6h1.200M11.500 533.7h1.200M11.500 549.8h1.200M11.500 565.9h1.200M11.500 582.0h1.200" stroke="#888" stroke-width="1"/></svg>
<div class="a" style="left:7px;top:265px;width:10px;height:3px;background:#c8c8c8"></div>
<div class="a" style="left:7px;top:287px;width:10px;height:3px;background:#c8c8c8"></div>
<div class="a" style="left:7px;top:343px;width:10px;height:3px;background:#c8c8c8"></div>
<div class="a" style="left:7px;top:364px;width:10px;height:3px;background:#c8c8c8"></div>
<div class="a" style="left:7px;top:426px;width:10px;height:3px;background:#c8c8c8"></div>
<div class="a" style="left:7px;top:469px;width:10px;height:3px;background:#c8c8c8"></div>
<div class="a" style="left:7px;top:501px;width:10px;height:3px;background:#c8c8c8"></div>
<div class="a" style="left:7px;top:519px;width:10px;height:3px;background:#c8c8c8"></div>
<div class="a" style="left:7px;top:550px;width:10px;height:3px;background:#c8c8c8"></div>
<div class="t" style="left:50.6px;top:175.500px;width:16px;text-align:center;font-size:6.500px;color:#555">1</div>
<div class="t" style="left:115.0px;top:175.500px;width:16px;text-align:center;font-size:6.500px;color:#555">1</div>
<div class="t" style="left:147.2px;top:175.500px;width:16px;text-align:center;font-size:6.500px;color:#555">2</div>
<div class="t" style="left:179.4px;top:175.500px;width:16px;text-align:center;font-size:6.500px;color:#555">3</div>
<div class="t" style="left:211.6px;top:175.500px;width:16px;text-align:center;font-size:6.500px;color:#555">4</div>
<div class="t" style="left:243.8px;top:175.500px;width:16px;text-align:center;font-size:6.500px;color:#555">5</div>
<div class="t" style="left:276.0px;top:175.500px;width:16px;text-align:center;font-size:6.500px;color:#555">6</div>
<div class="t" style="left:308.2px;top:175.500px;width:16px;text-align:center;font-size:6.500px;color:#555">7</div>
<div class="t" style="left:340.4px;top:175.500px;width:16px;text-align:center;font-size:6.500px;color:#555">8</div>
<div class="t" style="left:372.6px;top:175.500px;width:16px;text-align:center;font-size:6.500px;color:#555">9</div>
<div class="t" style="left:404.8px;top:175.500px;width:16px;text-align:center;font-size:6.500px;color:#555">10</div>
<div class="t" style="left:437.0px;top:175.500px;width:16px;text-align:center;font-size:6.500px;color:#555">11</div>
<div class="t" style="left:469.2px;top:175.500px;width:16px;text-align:center;font-size:6.500px;color:#555">12</div>
<div class="t" style="left:501.4px;top:175.500px;width:16px;text-align:center;font-size:6.500px;color:#555">13</div>
<div class="t" style="left:533.6px;top:175.500px;width:16px;text-align:center;font-size:6.500px;color:#555">14</div>
<div class="t" style="left:565.8px;top:175.500px;width:16px;text-align:center;font-size:6.500px;color:#555">15</div>
<div class="t" style="left:598.0px;top:175.500px;width:16px;text-align:center;font-size:6.500px;color:#555">16</div>
<div class="t" style="left:630.2px;top:175.500px;width:16px;text-align:center;font-size:6.500px;color:#555">17</div>
<div class="t" style="left:662.4px;top:175.500px;width:16px;text-align:center;font-size:6.500px;color:#555">18</div>
<div class="t" style="left:694.6px;top:175.500px;width:16px;text-align:center;font-size:6.500px;color:#555">19</div>
<div class="t" style="left:726.8px;top:175.500px;width:16px;text-align:center;font-size:6.500px;color:#555">20</div>
<div class="t" style="left:759.0px;top:175.500px;width:16px;text-align:center;font-size:6.500px;color:#555">21</div>
<div class="t" style="left:791.2px;top:175.500px;width:16px;text-align:center;font-size:6.500px;color:#555">22</div>
<div class="t" style="left:823.4px;top:175.500px;width:16px;text-align:center;font-size:6.500px;color:#555">23</div>
<div class="t" style="left:855.6px;top:175.500px;width:16px;text-align:center;font-size:6.500px;color:#555">24</div>
<div class="t" style="left:887.8px;top:175.500px;width:16px;text-align:center;font-size:6.500px;color:#555">25</div>
<div class="t" style="left:952.2px;top:175.500px;width:16px;text-align:center;font-size:6.500px;color:#555">27</div>
<div class="t" style="left:984.4px;top:175.500px;width:16px;text-align:center;font-size:6.500px;color:#555">28</div>
<div class="t" style="left:4px;top:212.7px;width:16px;text-align:center;font-size:6.500px;color:#555;transform-origin:50% 50%;transform:rotate(-90deg)">2</div>
<div class="t" style="left:4px;top:244.9px;width:16px;text-align:center;font-size:6.500px;color:#555;transform-origin:50% 50%;transform:rotate(-90deg)">3</div>
<div class="t" style="left:4px;top:277.1px;width:16px;text-align:center;font-size:6.500px;color:#555;transform-origin:50% 50%;transform:rotate(-90deg)">4</div>
<div class="t" style="left:4px;top:309.3px;width:16px;text-align:center;font-size:6.500px;color:#555;transform-origin:50% 50%;transform:rotate(-90deg)">5</div>
<div class="t" style="left:4px;top:341.5px;width:16px;text-align:center;font-size:6.500px;color:#555;transform-origin:50% 50%;transform:rotate(-90deg)">6</div>
<div class="t" style="left:4px;top:373.7px;width:16px;text-align:center;font-size:6.500px;color:#555;transform-origin:50% 50%;transform:rotate(-90deg)">7</div>
<div class="t" style="left:4px;top:405.9px;width:16px;text-align:center;font-size:6.500px;color:#555;transform-origin:50% 50%;transform:rotate(-90deg)">8</div>
<div class="t" style="left:4px;top:438.1px;width:16px;text-align:center;font-size:6.500px;color:#555;transform-origin:50% 50%;transform:rotate(-90deg)">9</div>
<div class="t" style="left:4px;top:470.3px;width:16px;text-align:center;font-size:6.500px;color:#555;transform-origin:50% 50%;transform:rotate(-90deg)">10</div>
<div class="t" style="left:4px;top:502.5px;width:16px;text-align:center;font-size:6.500px;color:#555;transform-origin:50% 50%;transform:rotate(-90deg)">11</div>
<div class="t" style="left:4px;top:534.7px;width:16px;text-align:center;font-size:6.500px;color:#555;transform-origin:50% 50%;transform:rotate(-90deg)">12</div>
<div class="t" style="left:4px;top:566.9px;width:16px;text-align:center;font-size:6.500px;color:#555;transform-origin:50% 50%;transform:rotate(-90deg)">13</div>

<!-- wdoc -->
<div class="a" style="left:84px;top:202px;width:849px;height:65px;background:#254064"></div>
<div class="a" style="left:84px;top:267px;width:850px;height:77px;background:#dbe5f1"></div>
<div class="a" style="left:84px;top:266px;width:850px;height:1px;background:#1f3050"></div>
<div class="a" style="left:84px;top:288px;width:850px;height:1px;background:#1f3050"></div>
<div class="a" style="left:84px;top:344px;width:850px;height:1px;background:#3a4660"></div>
<div class="a" style="left:84px;top:365px;width:850px;height:1px;background:#3d3d3d"></div>
<div class="a" style="left:84px;top:427px;width:850px;height:1px;background:#3d3d3d"></div>
<div class="a" style="left:84px;top:470px;width:850px;height:1px;background:#6a6a6a"></div>
<div class="a" style="left:84px;top:502px;width:850px;height:1px;background:#6a6a6a"></div>
<div class="a" style="left:84px;top:520px;width:850px;height:1px;background:#6a6a6a"></div>
<div class="a" style="left:84px;top:551px;width:850px;height:1px;background:#3d3d3d"></div>
<div class="a" style="left:84px;top:266px;width:2px;height:321px;background:#1f3050"></div>
<div class="a" style="left:933px;top:266px;width:2px;height:321px;background:#1f3050"></div>
<div class="a" style="left:392px;top:344px;width:1px;height:243px;background:#3d3d3d"></div>
<div class="t b bb" style="left:306px;top:233.9px;font-size:16.2px;transform:scaleX(0.9866);color:#fff;">Performance Area 5 – Integrity in Public Procurement</div>
<div class="t b bb" style="left:91.5px;top:269.0px;font-size:10px;transform:scaleX(0.9889);">Indicator 1. The public procurement system is comprehensive.</div>
<div class="t b bb" style="left:91.5px;top:289.0px;font-size:10px;transform:scaleX(0.9941);">Benchmark 1.1.</div>
<div class="t" style="left:168px;top:289.0px;font-size:10px;transform:scaleX(1.0451);">Public procurement legislation covers the acquisition of works, goods and services concerning public interests by:</div>
<div class="t" style="left:112px;top:303.0px;font-size:10px;transform:scaleX(1.0050);">A.</div>
<div class="t" style="left:132px;top:303.0px;font-size:10px;transform:scaleX(1.0433);">Publicly owned enterprises, including SOEs and municipality owned enterprises;</div>
<div class="t" style="left:112px;top:317.0px;font-size:10px;transform:scaleX(0.9521);">B.</div>
<div class="t" style="left:132px;top:317.0px;font-size:10px;transform:scaleX(1.0723);">Utilities and natural monopolies;</div>
<div class="t" style="left:112px;top:331.0px;font-size:10px;transform:scaleX(0.9000);">C.</div>
<div class="t" style="left:132px;top:331.0px;font-size:10px;transform:scaleX(1.0521);">Non-classified area of the national security and defence sector.</div>
<div class="t b bb" style="left:211px;top:349.0px;font-size:10px;transform:scaleX(0.9337);">QUESTIONS</div>
<div class="t b bb" style="left:569.5px;top:345.0px;font-size:10px;transform:scaleX(0.9395);">REPLIES AND SUPPORTING DOCUMENTS</div>
<div class="t b bb" style="left:92.5px;top:366.0px;font-size:10px;transform:scaleX(1.0273);">151.</div>
<div class="t" style="left:132px;top:366.0px;font-size:10px;word-spacing:1.20px;transform:scaleX(1.0001);">Provide  law(s)  and  other  legislative  acts  regulating</div>
<div class="t" style="left:91.5px;top:381.0px;font-size:10px;transform:scaleX(1.0703);">public procurement.</div>
<div class="t" style="left:405px;top:368.0px;font-size:10px;transform:scaleX(1.0031);">151.1.</div>
<div class="t" style="left:440.4px;top:368.0px;font-size:10px;transform:scaleX(1.0467);">Public procurement law(s) regulating acquisition of works, goods and services in the public sector <span class=cb>☐</span></div>
<div class="t" style="left:405px;top:383.0px;font-size:10px;transform:scaleX(1.0031);">151.2.</div>
<div class="t" style="left:440.4px;top:383.0px;font-size:10px;transform:scaleX(1.0439);">Other legislative acts regulating acquisition of works, goods and services in the public sector <span class=cb>☐</span></div>
<div class="t" style="left:405px;top:399.0px;font-size:10px;transform:scaleX(1.0031);">151.3.</div>
<div class="t" style="left:440.4px;top:399.0px;font-size:10px;transform:scaleX(1.0597);">Law(s) regulating exemptions from the competitive procurement procedures <span class=cb>☐</span></div>
<div class="t" style="left:405px;top:414.0px;font-size:10px;transform:scaleX(1.0031);">151.4.</div>
<div class="t" style="left:440.4px;top:414.0px;font-size:10px;transform:scaleX(1.0632);">Other legislative acts regulating exemptions from the competitive procurement procedures <span class=cb>☐</span></div>
<div class="t b bb" style="left:92.5px;top:429.0px;font-size:10px;transform:scaleX(1.0273);">152.</div>
<div class="t" style="left:132px;top:429.0px;font-size:10px;transform:scaleX(1.0528);">Provide reference to the public procurement legislative</div>
<div class="t" style="left:91.5px;top:443.0px;font-size:10px;word-spacing:1.35px;transform:scaleX(1.0001);">provisions  that  cover  the  acquisition  of  works,  goods  and</div>
<div class="t" style="left:91.5px;top:457.0px;font-size:10px;transform:scaleX(1.0374);">services concerning public interests by:</div>
<div class="t" style="left:126px;top:474.0px;font-size:10px;transform:scaleX(0.9521);">A.</div>
<div class="t" style="left:149px;top:474.0px;font-size:10px;word-spacing:1.08px;transform:scaleX(1.0001);">Publicly  owned  enterprises,  including  SOEs  and</div>
<div class="t" style="left:146.5px;top:488.0px;font-size:10px;transform:scaleX(1.0644);">municipality owned enterprises;</div>
<div class="t" style="left:126px;top:506.0px;font-size:10px;transform:scaleX(0.8992);">B.</div>
<div class="t" style="left:146.5px;top:506.0px;font-size:10px;transform:scaleX(1.0688);">Utilities and natural monopolies;</div>
<div class="t" style="left:126px;top:524.0px;font-size:10px;transform:scaleX(0.8500);">C.</div>
<div class="t" style="left:146.5px;top:524.0px;font-size:10px;word-spacing:1.24px;transform:scaleX(1.0001);">Non-classified  area  of  the  national  security  and</div>
<div class="t" style="left:146.5px;top:538.0px;font-size:10px;transform:scaleX(1.0394);">defence sector.</div>
<div class="t b bb" style="left:92.5px;top:552.0px;font-size:10px;transform:scaleX(1.0273);">153.</div>
<div class="t" style="left:132px;top:552.0px;font-size:10px;transform:scaleX(1.0646);">Provide the following statistics for 2022.</div>
<div class="t" style="left:405px;top:554.0px;font-size:10px;transform:scaleX(1.0031);">153.1.</div>
<div class="t" style="left:440.4px;top:554.0px;font-size:10px;transform:scaleX(1.0696);">Total number of public procurement contracts <span class=cb>☐</span></div>
<div class="t" style="left:405px;top:569.0px;font-size:10px;transform:scaleX(1.0031);">153.2.</div>
<div class="t" style="left:440.4px;top:569.0px;font-size:10px;transform:scaleX(1.0631);">Total value of public procurement contracts <span class=cb>☐</span></div>
<div class="a" style="left:74px;top:257px;width:9px;height:9px;background:#fff;border:1px solid #9a9a9a"></div>
<svg style="left:75.500px;top:258.500px" width="6" height="6" viewBox="0 0 6 6" fill="none" stroke="#555" stroke-width=".8"><path d="M3 0v6M0 3h6"/></svg>
<svg style="left:960px;top:428px" width="5" height="9" viewBox="0 0 5 9" fill="none" stroke="#666" stroke-width="1"><path d="M0 .5h5M0 8.500h5M2.500 .5v8"/></svg>
<div class="a" style="left:446px;top:314px;width:56px;height:2.500px;border-top:.7px solid #3a6cc8;border-bottom:.7px solid #3a6cc8;opacity:.75"></div>
<div class="a" style="left:226px;top:328px;width:58px;height:2.500px;border-top:.7px solid #3a6cc8;border-bottom:.7px solid #3a6cc8;opacity:.75"></div>
<div class="a" style="left:712px;top:380px;width:27px;height:1px;border-top:1px dotted #7d7d55"></div>
<div class="a" style="left:687px;top:395.5px;width:27px;height:1px;border-top:1px dotted #7d7d55"></div>

<div class="a" id="wstatus"></div>
<!-- wstatus -->
<svg style="left:120px;top:601px" width="11" height="10" viewBox="0 0 11 10" fill="none" stroke="#605e5c" stroke-width=".9"><path d="M.500.500h4l1 1 1-1h3.500v7H6l-.5.500-.500-.500H.5z"/><path d="M5.500 1.500v6M7.500 6l2.500 3" /></svg>
<svg style="left:809px;top:600.500px" width="10" height="10" viewBox="0 0 10 10" fill="none" stroke="#605e5c" stroke-width=".9"><path d="M0 2.500v-2h2M8 .5h2v2M10 7.500v2h-2M2 9.500H0v-2"/><path d="M3 2h3l1.500 1.500V8H3z"/></svg>
<svg style="left:854px;top:601px" width="11" height="9" viewBox="0 0 11 9" fill="none" stroke="#605e5c" stroke-width=".9"><path d="M.500.500h4.500v8H.5zM5.500.500h5v8h-5zM1.500 2.500h2.500M1.500 4.500h2.500M6.500 2.500h3M6.500 4.500h3"/></svg>
<div class="a" style="left:873px;top:599px;width:25px;height:13px;background:#c8c6c4"></div>
<svg style="left:880px;top:600.500px" width="9" height="10" viewBox="0 0 9 10" fill="none" stroke="#444" stroke-width=".9"><rect x=".5" y=".5" width="8" height="9"/><path d="M2 3h5M2 5h5M2 7h5"/></svg>
<svg style="left:906.500px;top:600.500px" width="11" height="10" viewBox="0 0 11 10" fill="none" stroke="#605e5c" stroke-width=".9"><rect x=".5" y=".5" width="8.500" height="8"/><path d="M.500 2.500h8.500M2 4.500h4M2 6.500h3"/><circle cx="8" cy="7.300" r="2.300" fill="#605e5c"/></svg>
<div class="a" style="left:929.500px;top:605px;width:4px;height:1px;background:#777"></div>
<div class="a" style="left:938px;top:605px;width:65px;height:1px;background:#8a8886"></div>
<div class="a" style="left:970.500px;top:601.500px;width:3px;height:8px;background:#605e5c"></div>
<div class="a" style="left:1007px;top:605px;width:5px;height:1px;background:#777"></div>
<div class="a" style="left:1009px;top:603px;width:1px;height:5px;background:#777"></div>
<div class="t" style="left:9px;top:598.5px;font-size:7.3px;transform:scaleX(0.9374);color:#605e5c;">Page 58 of 121</div>
<div class="t" style="left:68.3px;top:598.5px;font-size:7.3px;transform:scaleX(0.9355);color:#605e5c;">33736 words</div>
<div class="t" style="left:141.4px;top:598.5px;font-size:7.3px;transform:scaleX(0.9378);color:#605e5c;">English (United Kingdom)</div>
<div class="t" style="left:821px;top:598.5px;font-size:7.3px;transform:scaleX(0.8805);color:#605e5c;">Focus</div>

<div class="a" id="wtask"></div>
<!-- wtask -->
<div class="a" style="left:297px;top:612px;width:29px;height:26px;background:#48484b"></div>
<div class="a" style="left:103px;top:636.500px;width:27px;height:1.500px;background:#76b9ed"></div>
<div class="a" style="left:168px;top:636.500px;width:27px;height:1.500px;background:#76b9ed"></div>
<div class="a" style="left:201px;top:636.500px;width:27px;height:1.500px;background:#76b9ed"></div>
<div class="a" style="left:234px;top:636.500px;width:27px;height:1.500px;background:#76b9ed"></div>
<div class="a" style="left:267px;top:636.500px;width:26px;height:1.500px;background:#76b9ed"></div>
<div class="a" style="left:297px;top:636.500px;width:29px;height:1.500px;background:#76b9ed"></div>
<div class="a" style="left:332px;top:636.500px;width:26px;height:1.500px;background:#76b9ed"></div>
<svg style="left:14.500px;top:620px" width="11" height="11" viewBox="0 0 11 11" fill="#fff"><path d="M0 1.500l4.500-.700v4.400H0zM5.200.700L11 0v5.200H5.200zM0 5.900h4.500v4.400L0 9.600zM5.200 5.900H11V11l-5.800-.800z"/></svg>
<svg style="left:46px;top:620px" width="12" height="12" viewBox="0 0 12 12" fill="none" stroke="#fff" stroke-width="1.100"><circle cx="7.300" cy="4.500" r="3.700"/><path d="M4.600 7.300L.600 11.300"/></svg>
<svg style="left:77px;top:621px" width="12" height="10" viewBox="0 0 12 10" fill="none" stroke="#fff" stroke-width="1"><rect x="2" y="2" width="6" height="6"/><path d="M0 .500h2.500M0 9.500h2.500M10.500 0v3.500M10.500 5.500v4.500"/></svg>
<svg style="left:109px;top:618px" width="16" height="14" viewBox="0 0 16 14"><path d="M0 1.500h5.500l1.500 1.500h9v10H0z" fill="#f0b73a"/><path d="M0 5h16v8.500H0z" fill="#ffd75e"/><path d="M4 10h8v3.500H4z" fill="#4a9be0"/></svg>
<svg style="left:140.500px;top:617.500px" width="17" height="16" viewBox="0 0 17 16"><circle cx="9.500" cy="3" r="2.500" fill="#7b83eb"/><circle cx="14.500" cy="4.500" r="1.800" fill="#5059c9"/><path d="M6 6.500h8.500v5q0 3.500-4 3.500t-4.500-3.500z" fill="#7b83eb"/><path d="M12 6.500h5v4.500q0 2.500-2.500 2.500T12 11z" fill="#5059c9"/><rect x="0" y="4.500" width="8.500" height="8.500" rx="1" fill="#4b53bc"/><path d="M2.300 6.800h4M4.300 6.800v4.500" stroke="#fff" stroke-width="1.100"/></svg>
<div class="a" style="left:173px;top:617px;width:17px;height:17px;border-radius:9px;background:conic-gradient(from 200deg at 50% 50%,#1273c9 0 35%,#35c1f1 35% 55%,#55d96a 55% 80%,#1273c9 80%)"></div>
<div class="a" style="left:179px;top:623px;width:9px;height:7px;border-radius:4px;background:#2a2a2c"></div>
<svg style="left:205px;top:617.500px" width="18" height="16" viewBox="0 0 18 16"><rect x="5" y="1" width="13" height="14" rx="1" fill="#1a82e2"/><rect x="11" y="1" width="7" height="5" fill="#4fc3f7"/><rect x="5" y="10" width="13" height="5" fill="#0f5db0"/><rect x="0" y="4" width="9" height="9" rx="1" fill="#0f6cbd"/><circle cx="4.500" cy="8.500" r="2.300" fill="none" stroke="#fff" stroke-width="1.200"/></svg>
<svg style="left:240px;top:618px" width="15" height="15" viewBox="0 0 15 15"><path d="M0 0h15v10l-5 5H0z" fill="#fce100"/><path d="M15 10l-5 5v-5z" fill="#5c4b00"/></svg>
<div class="a" style="left:272px;top:616.500px;width:16px;height:16px;border-radius:8px;background:#fff;border:2.500px solid #1d9bd8"></div>
<div class="t b" style="left:276.500px;top:618px;font-size:10px;color:#1d9bd8">S</div>
<div class="a" style="left:281.500px;top:626.500px;width:8px;height:8px;border-radius:4px;background:#e0262b"></div><div class="a" style="left:283.500px;top:630px;width:4px;height:1px;background:#fff"></div>
<svg style="left:304px;top:617.500px" width="17" height="16" viewBox="0 0 17 16"><rect x="4" y="0" width="13" height="16" rx="1" fill="#41a5ee"/><rect x="4" y="4" width="13" height="4" fill="#2b7cd3"/><rect x="4" y="8" width="13" height="4" fill="#185abd"/><rect x="4" y="12" width="13" height="4" fill="#103f91"/><rect x="0" y="3.500" width="9" height="9" rx="1" fill="#185abd"/><path d="M2 6l1 4.500 1.500-4 1.500 4L7 6" stroke="#fff" fill="none" stroke-width=".9"/></svg>
<svg style="left:337px;top:617.500px" width="16" height="16" viewBox="0 0 16 16"><rect width="16" height="16" rx="4" fill="#4a8cff"/><rect x="3" y="5" width="7" height="6" rx="1.500" fill="#fff"/><path d="M10.500 7.300l3-2v5.400l-3-2z" fill="#fff"/></svg>
<div class="a" style="left:664px;top:617.500px;width:13px;height:13px;border-radius:7px;background:#f7a823"></div>
<div class="a" style="left:669px;top:625px;width:11px;height:7px;border-radius:4px;background:#e4e7ec"></div>
<div class="a" style="left:674px;top:616px;width:4px;height:4px;border-radius:2px;background:#e55b2d"></div>
<svg style="left:769px;top:623px" width="9" height="5" viewBox="0 0 9 5" fill="none" stroke="#fff" stroke-width="1"><path d="M.500 4.500l4-4 4 4"/></svg>
<svg style="left:784px;top:621.500px" width="13" height="8" viewBox="0 0 13 8"><path d="M3 8a3 3 0 0 1 .5-5.500A3.500 3.500 0 0 1 10 3a2.600 2.600 0 0 1 .5 5z" fill="#2f8fe6"/></svg>
<svg style="left:801px;top:619px" width="8" height="14" viewBox="0 0 8 14" fill="none"><rect x="1.700" y="0" width="4.600" height="8.500" rx="2.300" fill="#fff"/><path d="M.500 6.500q0 4 3.500 4t3.500-4M4 10.500v3" stroke="#ddd" stroke-width="1"/></svg>
<div class="a" style="left:816px;top:620.500px;width:10px;height:10px;border-radius:5px;background:#9cc7a6;border:1px solid #e8e8e8"></div><div class="a" style="left:821px;top:626px;width:6px;height:6px;background:#e6b93c;border-radius:1px"></div>
<svg style="left:832px;top:620px" width="12" height="12" viewBox="0 0 12 12"><circle cx="7" cy="2.500" r="2" fill="#7b83eb"/><path d="M4 5h7.500v4q0 3-3.700 3T4 9z" fill="#7b83eb"/><rect x="0" y="3.500" width="6.500" height="6.500" rx="1" fill="#4b53bc"/><circle cx="9.500" cy="9.500" r="2.300" fill="#c4314b"/></svg>
<svg style="left:847px;top:620.500px" width="12" height="11" viewBox="0 0 12 11"><rect width="12" height="11" rx="3" fill="#4a8cff"/><rect x="2" y="3.500" width="5.500" height="4.500" rx="1" fill="#fff"/><path d="M8 5l2.300-1.500v4.500L8 6.500z" fill="#fff"/></svg>
<svg style="left:863px;top:621.500px" width="13" height="8" viewBox="0 0 13 8" fill="none" stroke="#fff" stroke-width="1"><rect x="1.500" y=".5" width="11" height="7" rx="1"/><path d="M0 2.500v3"/><rect x="7" y="2" width="4" height="4" fill="#fff" stroke="none"/></svg>
<svg style="left:879px;top:620px" width="12" height="12" viewBox="0 0 12 12" fill="none" stroke="#fff" stroke-width="1"><rect x="2.500" y=".5" width="9" height="6.500"/><path d="M7 7v2.500M4.500 10h5M.500 5v6.500h3"/></svg>
<svg style="left:894px;top:621px" width="10" height="10" viewBox="0 0 10 10" fill="none" stroke="#fff" stroke-width=".9"><path d="M.500 3.500h2l2.500-2.500v8l-2.500-2.500h-2z"/><path d="M6.500 3.500q1 1.500 0 3M8 2q2 3 0 6" stroke="#aaa"/></svg>
<svg style="left:988px;top:620px" width="11" height="11" viewBox="0 0 11 11"><path d="M0 0h11v8.500H7L5.500 10.500 4 8.500H0z" fill="#fff"/><path d="M2 2.500h7M2 4.500h7" stroke="#2a2a2c" stroke-width=".8"/></svg>
<div class="t" style="left:683px;top:619.5px;font-size:9.5px;transform:scaleX(0.9089);color:#fff;">5°C</div>
<div class="t" style="left:703px;top:619.5px;font-size:9.5px;transform:scaleX(1.0011);color:#fff;">Mostly sunny</div>
<div class="t" style="left:912px;top:619.5px;font-size:8.2px;transform:scaleX(0.8732);color:#fff;">ENG</div>
<div class="t" style="left:946.7px;top:612.6px;font-size:8.2px;transform:scaleX(0.8683);color:#fff;">10:47</div>
<div class="t" style="left:936px;top:624.5px;font-size:8.2px;transform:scaleX(0.9760);color:#fff;">10/02/2023</div>

<!-- VIDEO GALLERY -->
<!-- gallery -->
<div class="a" style="left:1042.5px;top:99.6px;width:107px;height:60px;background:linear-gradient(90deg,#bdbdbd 0 5%,#e9e9e9 6% 62%,#5d5d5a 63% 66%,#dfe3e0 67% 74%,#6d7a6e 75%);overflow:hidden"><div class="a" style="left:76px;top:-3px;width:34px;height:34px;background:#3f4c41;border-radius:40%;filter:blur(2px);"></div><div class="a" style="left:72px;top:2px;width:10px;height:14px;background:#e8ece8;border-radius:30%;filter:blur(1.5px);"></div><div class="a" style="left:60px;top:33px;width:50px;height:30px;background:#7b706c;border-radius:0;filter:blur(1px);"></div><div class="a" style="left:66px;top:31px;width:25px;height:20px;background:#1d1d1f;border-radius:30%;filter:blur(1px);"></div><div class="a" style="left:36px;top:10px;width:31px;height:24px;background:#6a6663;border-radius:50% 50% 40% 40%;filter:blur(1.2px);"></div><div class="a" style="left:38px;top:17px;width:28px;height:31px;background:#84695f;border-radius:45%;filter:blur(1.2px);"></div><div class="a" style="left:39px;top:30px;width:25px;height:2.5px;background:#4a3f3c;border-radius:1px;filter:blur(0.6px);"></div><div class="a" style="left:44px;top:39px;width:16px;height:8px;background:#b9a8a0;border-radius:40%;filter:blur(1.5px);"></div><div class="a" style="left:8px;top:44px;width:85px;height:22px;background:#2a2b2d;border-radius:30% 30% 0 0;filter:blur(1.5px);"></div></div>
<div class="a" style="left:1042.5px;top:148.1px;width:107.0px;height:11.500px;background:rgba(10,10,10,.55)"></div>
<svg style="left:1044.5px;top:148.89999999999998px" width="9" height="10" viewBox="0 0 9 10" fill="none"><rect x="3" y=".8" width="3.200" height="5.200" rx="1.600" fill="#e8433f"/><path d="M1.500 4.800q0 2.800 3.100 2.800t3.100-2.800M4.600 7.600v1.800" stroke="#e8433f" stroke-width="1"/><path d="M8 .600L1 9.400" stroke="#e8433f" stroke-width="1.200"/></svg>
<div class="a" style="left:1153.3px;top:99.6px;width:107px;height:60px;background:#242424;overflow:hidden"></div>
<div class="a" style="left:1153.3px;top:148.1px;width:63.9px;height:11.500px;background:rgba(10,10,10,.55)"></div>
<svg style="left:1155.3px;top:148.89999999999998px" width="9" height="10" viewBox="0 0 9 10" fill="none"><rect x="3" y=".8" width="3.200" height="5.200" rx="1.600" fill="#e8433f"/><path d="M1.500 4.800q0 2.800 3.100 2.800t3.100-2.800M4.600 7.600v1.800" stroke="#e8433f" stroke-width="1"/><path d="M8 .600L1 9.400" stroke="#e8433f" stroke-width="1.200"/></svg>
<div class="a" style="left:1042.5px;top:163.6px;width:107px;height:60px;background:linear-gradient(100deg,#8aa6cd,#6f90bf 60%,#7c9ac5);overflow:hidden"><div class="t b" style="left:22px;top:3px;font-size:5px;line-height:6px;height:6px;color:#fff;opacity:0.9">◉OECD</div><div class="t b" style="left:84px;top:3px;font-size:5px;line-height:6px;height:6px;color:#fff;opacity:0.9">◉OECD</div><div class="t b" style="left:8px;top:18px;font-size:5px;line-height:6px;height:6px;color:#fff;opacity:0.9">◉OECD</div><div class="t b" style="left:72px;top:18px;font-size:5px;line-height:6px;height:6px;color:#fff;opacity:0.9">◉OECD</div><div class="t b" style="left:0px;top:32px;font-size:5px;line-height:6px;height:6px;color:#fff;opacity:0.9">◉OECD</div><div class="t b" style="left:86px;top:32px;font-size:4px;line-height:6px;height:6px;color:#fff;opacity:0.6">◉OECD</div><div class="t b" style="left:26px;top:32px;font-size:4px;line-height:6px;height:6px;color:#fff;opacity:0.5">◉OECD</div><div class="a" style="left:37px;top:-6px;width:38px;height:30px;background:#4b2c1e;border-radius:50%;filter:blur(1.2px);"></div><div class="a" style="left:40px;top:7px;width:32px;height:43px;background:#dcb9a9;border-radius:45%;filter:blur(1.2px);"></div><div class="a" style="left:35px;top:20px;width:17px;height:10px;background:transparent;border-radius:3px;border:2.200px solid #171214;"></div><div class="a" style="left:54px;top:20px;width:17px;height:10px;background:transparent;border-radius:3px;border:2.200px solid #171214;"></div><div class="a" style="left:22px;top:41px;width:78px;height:24px;background:#b38d2f;border-radius:40% 40% 0 0;filter:blur(1.5px);"></div><div class="a" style="left:44px;top:44px;width:24px;height:10px;background:#d9b9aa;border-radius:40%;filter:blur(1.5px);"></div></div>
<div class="a" style="left:1042.5px;top:212.1px;width:105.0px;height:11.500px;background:rgba(10,10,10,.55)"></div>
<svg style="left:1044.5px;top:212.89999999999998px" width="9" height="10" viewBox="0 0 9 10" fill="none"><rect x="3" y=".8" width="3.200" height="5.200" rx="1.600" fill="#e8433f"/><path d="M1.500 4.800q0 2.800 3.100 2.800t3.100-2.800M4.600 7.600v1.800" stroke="#e8433f" stroke-width="1"/><path d="M8 .600L1 9.400" stroke="#e8433f" stroke-width="1.200"/></svg>
<div class="a" style="left:1153.3px;top:163.6px;width:107px;height:60px;background:linear-gradient(90deg,#f0f0f0 0 6%,#b9b9b9 7% 9%,#ececec 10% 22%,#a9a9a9 23% 25%,#e9e9e9 26% 40%,#8d8d8d 41% 43%,#e4e4e4 44% 50%,#cfcfcf 51% 69%,#262626 70% 79%,#8e8e8e 80%);overflow:hidden"><div class="a" style="left:86px;top:6px;width:22px;height:30px;background:#6f7170;border-radius:0;filter:blur(1px);"></div><div class="a" style="left:86px;top:33px;width:22px;height:4px;background:#e3e3e3;border-radius:0;filter:blur(0.8px);"></div><div class="a" style="left:86px;top:40px;width:22px;height:20px;background:#3e4042;border-radius:0;filter:blur(1px);"></div><div class="a" style="left:0px;top:40px;width:45px;height:20px;background:#d5d5d5;border-radius:0;filter:blur(1.5px);"></div><div class="a" style="left:31px;top:9px;width:43px;height:44px;background:#2b1f1d;border-radius:50% 50% 35% 35%;filter:blur(1.5px);"></div><div class="a" style="left:43px;top:24px;width:23px;height:25px;background:#c9a08f;border-radius:45%;filter:blur(1.3px);"></div><div class="a" style="left:42px;top:22px;width:25px;height:6px;background:#2b1f1d;border-radius:50%;filter:blur(1px);"></div></div>
<div class="a" style="left:1153.3px;top:212.1px;width:103.0px;height:11.500px;background:rgba(10,10,10,.55)"></div>
<svg style="left:1155.3px;top:212.89999999999998px" width="9" height="10" viewBox="0 0 9 10" fill="none"><rect x="3" y=".8" width="3.200" height="5.200" rx="1.600" fill="#e8433f"/><path d="M1.500 4.800q0 2.800 3.100 2.800t3.100-2.800M4.600 7.600v1.800" stroke="#e8433f" stroke-width="1"/><path d="M8 .600L1 9.400" stroke="#e8433f" stroke-width="1.200"/></svg>
<div class="a" style="left:1042.5px;top:227.6px;width:107px;height:60px;background:linear-gradient(180deg,#1b5fb8,#1553a8);overflow:hidden"><div class="t b" style="left:4px;top:4px;font-size:5.5px;line-height:6px;height:6px;color:#fff;opacity:1">◉OECD</div><div class="t b" style="left:80px;top:4px;font-size:5.5px;line-height:6px;height:6px;color:#fff;opacity:1">◉OCDE</div><div class="t b" style="left:5px;top:17px;font-size:4px;line-height:6px;height:6px;color:#fff;opacity:0.45">◉OECD</div><div class="t b" style="left:32px;top:17px;font-size:4px;line-height:6px;height:6px;color:#fff;opacity:0.45">◉OECD</div><div class="t b" style="left:86px;top:17px;font-size:4px;line-height:6px;height:6px;color:#fff;opacity:0.45">◉OECD</div><div class="t b" style="left:18px;top:24px;font-size:4px;line-height:6px;height:6px;color:#fff;opacity:0.45">◉OECD</div><div class="t b" style="left:74px;top:24px;font-size:4px;line-height:6px;height:6px;color:#fff;opacity:0.45">◉OECD</div><div class="t b" style="left:4px;top:31px;font-size:4px;line-height:6px;height:6px;color:#fff;opacity:0.45">◉OECD</div><div class="t b" style="left:32px;top:31px;font-size:4px;line-height:6px;height:6px;color:#fff;opacity:0.45">◉OECD</div><div class="t b" style="left:86px;top:31px;font-size:4px;line-height:6px;height:6px;color:#fff;opacity:0.45">◉OECD</div><div class="t b" style="left:18px;top:38px;font-size:4px;line-height:6px;height:6px;color:#fff;opacity:0.45">◉OECD</div><div class="t b" style="left:74px;top:38px;font-size:4px;line-height:6px;height:6px;color:#fff;opacity:0.45">◉OECD</div><div class="a" style="left:42px;top:7px;width:40px;height:42px;background:#8f8473;border-radius:50% 50% 45% 45%;filter:blur(1.3px);"></div><div class="a" style="left:46px;top:15px;width:26px;height:34px;background:#d9b6a4;border-radius:45%;filter:blur(1.2px);"></div><div class="a" style="left:46px;top:10px;width:24px;height:10px;background:#a3957f;border-radius:50%;filter:blur(1.2px);"></div><div class="a" style="left:44px;top:46px;width:32px;height:16px;background:#3a3a3c;border-radius:30% 30% 0 0;filter:blur(1.2px);"></div></div>
<div class="a" style="left:1042.5px;top:276.1px;width:100.0px;height:11.500px;background:rgba(10,10,10,.55)"></div>
<svg style="left:1044.5px;top:276.9px" width="9" height="10" viewBox="0 0 9 10" fill="none"><rect x="3" y=".8" width="3.200" height="5.200" rx="1.600" fill="#e8433f"/><path d="M1.500 4.800q0 2.800 3.100 2.800t3.100-2.800M4.600 7.600v1.800" stroke="#e8433f" stroke-width="1"/><path d="M8 .600L1 9.400" stroke="#e8433f" stroke-width="1.200"/></svg>
<div class="a" style="left:1153.3px;top:227.6px;width:107px;height:60px;background:linear-gradient(180deg,#1b5fb8,#1553a8);overflow:hidden"><div class="t b" style="left:4px;top:4px;font-size:5.5px;line-height:6px;height:6px;color:#fff;opacity:1">◉OECD</div><div class="t b" style="left:80px;top:4px;font-size:5.5px;line-height:6px;height:6px;color:#fff;opacity:1">◉OCDE</div><div class="t b" style="left:5px;top:17px;font-size:4px;line-height:6px;height:6px;color:#fff;opacity:0.45">◉OECD</div><div class="t b" style="left:32px;top:17px;font-size:4px;line-height:6px;height:6px;color:#fff;opacity:0.45">◉OECD</div><div class="t b" style="left:86px;top:17px;font-size:4px;line-height:6px;height:6px;color:#fff;opacity:0.45">◉OECD</div><div class="t b" style="left:18px;top:24px;font-size:4px;line-height:6px;height:6px;color:#fff;opacity:0.45">◉OECD</div><div class="t b" style="left:74px;top:24px;font-size:4px;line-height:6px;height:6px;color:#fff;opacity:0.45">◉OECD</div><div class="t b" style="left:4px;top:31px;font-size:4px;line-height:6px;height:6px;color:#fff;opacity:0.45">◉OECD</div><div class="t b" style="left:32px;top:31px;font-size:4px;line-height:6px;height:6px;color:#fff;opacity:0.45">◉OECD</div><div class="t b" style="left:86px;top:31px;font-size:4px;line-height:6px;height:6px;color:#fff;opacity:0.45">◉OECD</div><div class="t b" style="left:18px;top:38px;font-size:4px;line-height:6px;height:6px;color:#fff;opacity:0.45">◉OECD</div><div class="t b" style="left:74px;top:38px;font-size:4px;line-height:6px;height:6px;color:#fff;opacity:0.45">◉OECD</div><div class="a" style="left:35px;top:10px;width:34px;height:30px;background:#2a2a30;border-radius:50%;filter:blur(1px);"></div><div class="a" style="left:38px;top:7px;width:28px;height:39px;background:#d3ad9e;border-radius:48%;filter:blur(1.2px);"></div><div class="a" style="left:41px;top:20px;width:22px;height:2px;background:#8a6b62;border-radius:1px;filter:blur(0.6px);"></div><div class="a" style="left:22px;top:45px;width:74px;height:20px;background:#3c4047;border-radius:35% 35% 0 0;filter:blur(1.3px);"></div><div class="a" style="left:46px;top:43px;width:13px;height:9px;background:#e6e6e6;border-radius:30%;filter:blur(1px);"></div></div>
<div class="a" style="left:1153.3px;top:276.1px;width:69.5px;height:11.500px;background:rgba(10,10,10,.55)"></div>
<svg style="left:1155.3px;top:276.9px" width="9" height="10" viewBox="0 0 9 10" fill="none"><rect x="3" y=".8" width="3.200" height="5.200" rx="1.600" fill="#e8433f"/><path d="M1.500 4.800q0 2.800 3.100 2.800t3.100-2.800M4.600 7.600v1.800" stroke="#e8433f" stroke-width="1"/><path d="M8 .600L1 9.400" stroke="#e8433f" stroke-width="1.200"/></svg>
<div class="a" style="left:1042.5px;top:291.6px;width:107px;height:60px;background:radial-gradient(ellipse at 50% 40%,#0d1513,#060909);overflow:hidden"></div>
<div class="a" style="left:1042.5px;top:340.1px;width:79.8px;height:11.500px;background:rgba(10,10,10,.55)"></div>
<svg style="left:1044.5px;top:340.90000000000003px" width="9" height="10" viewBox="0 0 9 10" fill="none"><rect x="3" y=".8" width="3.200" height="5.200" rx="1.600" fill="#e8433f"/><path d="M1.500 4.800q0 2.800 3.100 2.800t3.100-2.800M4.600 7.600v1.800" stroke="#e8433f" stroke-width="1"/><path d="M8 .600L1 9.400" stroke="#e8433f" stroke-width="1.200"/></svg>
<div class="a" style="left:1153.3px;top:291.6px;width:107px;height:60px;background:#242424;overflow:hidden"></div>
<div class="a" style="left:1153.3px;top:340.1px;width:49.9px;height:11.500px;background:rgba(10,10,10,.55)"></div>
<svg style="left:1155.3px;top:340.90000000000003px" width="9" height="10" viewBox="0 0 9 10" fill="none"><rect x="3" y=".8" width="3.200" height="5.200" rx="1.600" fill="#e8433f"/><path d="M1.500 4.800q0 2.800 3.100 2.800t3.100-2.800M4.600 7.600v1.800" stroke="#e8433f" stroke-width="1"/><path d="M8 .600L1 9.400" stroke="#e8433f" stroke-width="1.200"/></svg>
<div class="a" style="left:1042.5px;top:355.6px;width:107px;height:60px;background:linear-gradient(90deg,#b3b7b4,#d6d6d4 50%,#e9e9e8);overflow:hidden"><div class="a" style="left:44px;top:30px;width:22px;height:22px;background:#23282a;border-radius:40%;filter:blur(1.5px);"></div><div class="a" style="left:60px;top:10px;width:30px;height:22px;background:#2b2724;border-radius:50% 50% 40% 40%;filter:blur(1.2px);"></div><div class="a" style="left:63px;top:19px;width:25px;height:28px;background:#b08e7d;border-radius:45%;filter:blur(1.2px);"></div><div class="a" style="left:44px;top:41px;width:66px;height:24px;background:#23292b;border-radius:30% 30% 0 0;filter:blur(1.5px);"></div><div class="a" style="left:70px;top:42px;width:12px;height:8px;background:#c9b6ac;border-radius:40%;filter:blur(1.3px);"></div></div>
<div class="a" style="left:1042.5px;top:404.1px;width:104.0px;height:11.500px;background:rgba(10,10,10,.55)"></div>
<svg style="left:1044.5px;top:404.90000000000003px" width="9" height="10" viewBox="0 0 9 10" fill="none"><rect x="3" y=".8" width="3.200" height="5.200" rx="1.600" fill="#e8433f"/><path d="M1.500 4.800q0 2.800 3.100 2.800t3.100-2.800M4.600 7.600v1.800" stroke="#e8433f" stroke-width="1"/><path d="M8 .600L1 9.400" stroke="#e8433f" stroke-width="1.200"/></svg>
<div class="a" style="left:1150.8px;top:353.1px;width:112px;height:65px;background:#d9e43a"></div>
<div class="a" style="left:1153.3px;top:355.6px;width:107px;height:60px;background:linear-gradient(180deg,#7a5a3a,#6a4526 40%,#5c3c22);overflow:hidden"><div class="a" style="left:0px;top:3px;width:107px;height:3px;background:#3a2616;border-radius:0;filter:blur(0.8px);"></div><div class="a" style="left:0px;top:16px;width:107px;height:3px;background:#3a2616;border-radius:0;filter:blur(0.8px);"></div><div class="a" style="left:2px;top:6px;width:100px;height:9px;background:repeating-linear-gradient(90deg,#b39b78 0 3px,#5a3d25 3px 5px,#8d7a66 5px 7px,#4a3220 7px 10px);border-radius:0;filter:blur(0.7px);"></div><div class="a" style="left:2px;top:20px;width:100px;height:8px;background:repeating-linear-gradient(90deg,#9a8468 0 2px,#4a3220 2px 5px,#c0ac8c 5px 6px,#5a3d25 6px 9px);border-radius:0;filter:blur(0.7px);"></div><div class="a" style="left:10px;top:22px;width:12px;height:16px;background:#b89a3c;border-radius:2px;filter:blur(1.2px);"></div><div class="a" style="left:34px;top:24px;width:14px;height:22px;background:#4a3322;border-radius:1px;filter:blur(1px);"></div><div class="a" style="left:0px;top:30px;width:107px;height:20px;background:repeating-linear-gradient(90deg,#6b4a2c 0 6px,#8a6a44 6px 8px,#4e341f 8px 13px);border-radius:0;filter:blur(1.2px);opacity:.55;"></div><div class="a" style="left:84px;top:22px;width:20px;height:24px;background:#9b8f80;border-radius:2px;filter:blur(1.5px);opacity:.7;"></div><div class="a" style="left:46px;top:13px;width:31px;height:38px;background:#9c6747;border-radius:50% 50% 30% 30%;filter:blur(1.3px);"></div><div class="a" style="left:52px;top:18px;width:17px;height:24px;background:#e5b89f;border-radius:45%;filter:blur(1.1px);"></div><div class="a" style="left:36px;top:41px;width:46px;height:12px;background:#e9e1d9;border-radius:40% 40% 0 0;filter:blur(1.3px);"></div><div class="a" style="left:55px;top:40px;width:11px;height:8px;background:#e1b39a;border-radius:40%;filter:blur(1px);"></div></div>
<div class="a" style="left:1153.3px;top:404.1px;width:105.8px;height:11.500px;background:rgba(10,10,10,.55)"></div>
<div class="a" style="left:1042.5px;top:419.6px;width:107px;height:60px;background:linear-gradient(90deg,#dcdcda,#efefed 30%,#eaeae8);overflow:hidden"><div class="a" style="left:58px;top:0px;width:28px;height:17px;background:#a9a9a6;border-radius:30%;filter:blur(1.3px);"></div><div class="a" style="left:62px;top:2px;width:20px;height:9px;background:#ecece9;border-radius:30%;filter:blur(1.2px);"></div><div class="a" style="left:57px;top:18px;width:30px;height:30px;background:#3a2928;border-radius:2px;filter:blur(1px);"></div><div class="a" style="left:57px;top:46px;width:52px;height:16px;background:#2c2a2b;border-radius:0;filter:blur(1.2px);"></div><div class="a" style="left:87px;top:40px;width:22px;height:8px;background:#555;border-radius:40% 0 0 0;filter:blur(1.5px);"></div></div>
<div class="a" style="left:1042.5px;top:468.1px;width:92.8px;height:11.500px;background:rgba(10,10,10,.55)"></div>
<svg style="left:1044.5px;top:468.90000000000003px" width="9" height="10" viewBox="0 0 9 10" fill="none"><rect x="3" y=".8" width="3.200" height="5.200" rx="1.600" fill="#e8433f"/><path d="M1.500 4.800q0 2.800 3.100 2.800t3.100-2.800M4.600 7.600v1.800" stroke="#e8433f" stroke-width="1"/><path d="M8 .600L1 9.400" stroke="#e8433f" stroke-width="1.200"/></svg>
<div class="a" style="left:1153.3px;top:419.6px;width:107px;height:60px;background:linear-gradient(90deg,#d3d3d1 0 68%,#8a8578 69% 70%,#e2dbcd 71%);overflow:hidden"><div class="a" style="left:72px;top:0px;width:35px;height:60px;background:repeating-linear-gradient(180deg,#e6dfd1 0 4px,#cdc4b2 4px 6px);border-radius:0;filter:blur(0.6px);"></div><div class="a" style="left:32px;top:6px;width:27px;height:20px;background:#1f1c1a;border-radius:50% 50% 40% 40%;filter:blur(1.1px);"></div><div class="a" style="left:32px;top:13px;width:25px;height:30px;background:#b99279;border-radius:45%;filter:blur(1.2px);"></div><div class="a" style="left:22px;top:37px;width:54px;height:26px;background:#8c939b;border-radius:35% 35% 0 0;filter:blur(1.5px);"></div><div class="a" style="left:24px;top:33px;width:18px;height:14px;background:#c29c84;border-radius:45%;filter:blur(1.2px);"></div></div>
<div class="a" style="left:1153.3px;top:468.1px;width:103.0px;height:11.500px;background:rgba(10,10,10,.55)"></div>
<svg style="left:1155.3px;top:468.90000000000003px" width="9" height="10" viewBox="0 0 9 10" fill="none"><rect x="3" y=".8" width="3.200" height="5.200" rx="1.600" fill="#e8433f"/><path d="M1.500 4.800q0 2.800 3.100 2.800t3.100-2.800M4.600 7.600v1.800" stroke="#e8433f" stroke-width="1"/><path d="M8 .600L1 9.400" stroke="#e8433f" stroke-width="1.200"/></svg>
<div class="a" style="left:1042.5px;top:483.6px;width:107px;height:60px;background:linear-gradient(90deg,#e9dfc8,#f3ead6 40%,#f1e8d6);overflow:hidden"><div class="a" style="left:19px;top:24px;width:40px;height:28px;background:#2a2624;border-radius:35% 35% 10% 10%;filter:blur(1.3px);"></div><div class="a" style="left:44px;top:40px;width:58px;height:24px;background:#25252a;border-radius:30% 30% 0 0;filter:blur(1.5px);"></div><div class="a" style="left:54px;top:26px;width:29px;height:24px;background:#a67d69;border-radius:45%;filter:blur(1.2px);"></div><div class="a" style="left:55px;top:6px;width:36px;height:27px;background:#1b1716;border-radius:50% 50% 45% 45%;filter:blur(1.2px);"></div></div>
<div class="a" style="left:1042.5px;top:532.1px;width:105.0px;height:11.500px;background:rgba(10,10,10,.55)"></div>
<svg style="left:1044.5px;top:532.9px" width="9" height="10" viewBox="0 0 9 10" fill="none"><rect x="3" y=".8" width="3.200" height="5.200" rx="1.600" fill="#e8433f"/><path d="M1.500 4.800q0 2.800 3.100 2.800t3.100-2.800M4.600 7.600v1.800" stroke="#e8433f" stroke-width="1"/><path d="M8 .600L1 9.400" stroke="#e8433f" stroke-width="1.200"/></svg>
<div class="a" style="left:1153.3px;top:483.6px;width:107px;height:60px;background:#242424;overflow:hidden"></div>
<div class="a" style="left:1153.3px;top:532.1px;width:107.0px;height:11.500px;background:rgba(10,10,10,.55)"></div>
<svg style="left:1155.3px;top:532.9px" width="9" height="10" viewBox="0 0 9 10" fill="none"><rect x="3" y=".8" width="3.200" height="5.200" rx="1.600" fill="#e8433f"/><path d="M1.500 4.800q0 2.800 3.100 2.800t3.100-2.800M4.600 7.600v1.800" stroke="#e8433f" stroke-width="1"/><path d="M8 .600L1 9.400" stroke="#e8433f" stroke-width="1.200"/></svg>
<div class="a" style="left:1042.5px;top:547.6px;width:107px;height:60px;background:linear-gradient(90deg,#cfccc5,#e2dfd8 40%,#dddad3);overflow:hidden"><div class="a" style="left:82px;top:2px;width:18px;height:42px;background:repeating-linear-gradient(180deg,#7d7d6f 0 6px,#a9a99a 6px 8px);border-radius:1px;filter:blur(1.2px);"></div><div class="a" style="left:86px;top:2px;width:2px;height:42px;background:#b5b5a6;border-radius:0;filter:blur(0.8px);"></div><div class="a" style="left:93px;top:2px;width:2px;height:42px;background:#b5b5a6;border-radius:0;filter:blur(0.8px);"></div><div class="a" style="left:34px;top:33px;width:52px;height:30px;background:#2a2a2d;border-radius:35% 35% 0 0;filter:blur(2.2px);"></div><div class="a" style="left:49px;top:15px;width:19px;height:15px;background:#3a332e;border-radius:50% 50% 40% 40%;filter:blur(1px);"></div><div class="a" style="left:50px;top:19px;width:17px;height:21px;background:#caa691;border-radius:45%;filter:blur(1.1px);"></div></div>
<div class="a" style="left:1042.5px;top:596.1px;width:105.0px;height:11.500px;background:rgba(10,10,10,.55)"></div>
<svg style="left:1044.5px;top:596.9px" width="9" height="10" viewBox="0 0 9 10" fill="none"><rect x="3" y=".8" width="3.200" height="5.200" rx="1.600" fill="#e8433f"/><path d="M1.500 4.800q0 2.800 3.100 2.800t3.100-2.800M4.600 7.600v1.800" stroke="#e8433f" stroke-width="1"/><path d="M8 .600L1 9.400" stroke="#e8433f" stroke-width="1.200"/></svg>
<div class="a" style="left:1153.3px;top:547.6px;width:107px;height:60px;background:linear-gradient(90deg,#8d8d8d 0 10%,#b9b9b7 11% 25%,#6b6b66 26% 27%,#e4dcc8 28%);overflow:hidden"><div class="a" style="left:29px;top:3px;width:78px;height:42px;background:repeating-linear-gradient(180deg,#ece4d0 0 3px,#cfc5ad 3px 5px);border-radius:0;filter:blur(0.6px);"></div><div class="a" style="left:0px;top:0px;width:30px;height:6px;background:#4a4a4a;border-radius:0;filter:blur(1.5px);"></div><div class="a" style="left:0px;top:44px;width:107px;height:16px;background:#5b5d60;border-radius:0;filter:blur(1.5px);"></div><div class="a" style="left:4px;top:33px;width:40px;height:20px;background:#2e3135;border-radius:35% 35% 0 0;filter:blur(1.4px);"></div><div class="a" style="left:16px;top:19px;width:15px;height:12px;background:#201d1c;border-radius:50%;filter:blur(1px);"></div><div class="a" style="left:17px;top:23px;width:13px;height:15px;background:#9b7966;border-radius:45%;filter:blur(1px);"></div><div class="a" style="left:79px;top:31px;width:25px;height:26px;background:#23242d;border-radius:40% 40% 10% 10%;filter:blur(1.3px);"></div><div class="a" style="left:53px;top:40px;width:30px;height:12px;background:#dfe3e6;border-radius:40% 40% 0 0;filter:blur(1.2px);"></div><div class="a" style="left:57px;top:21px;width:26px;height:19px;background:#1d1a1b;border-radius:50%;filter:blur(1.1px);"></div><div class="a" style="left:59px;top:31px;width:12px;height:11px;background:#b08d7b;border-radius:45%;filter:blur(1px);"></div></div>
<div class="a" style="left:1153.3px;top:596.1px;width:105.5px;height:11.500px;background:rgba(10,10,10,.55)"></div>
<svg style="left:1155.3px;top:596.9px" width="9" height="10" viewBox="0 0 9 10" fill="none"><rect x="3" y=".8" width="3.200" height="5.200" rx="1.600" fill="#e8433f"/><path d="M1.500 4.800q0 2.800 3.100 2.800t3.100-2.800M4.600 7.600v1.800" stroke="#e8433f" stroke-width="1"/><path d="M8 .600L1 9.400" stroke="#e8433f" stroke-width="1.200"/></svg>
<div class="t" style="left:1057.4px;top:146.8px;font-size:8.5px;transform:scaleX(1.0160);color:#fff;">Kyrgyzstan - Arslanbe...</div>
<div class="t" style="left:1168.2px;top:146.8px;font-size:8.5px;transform:scaleX(0.9373);color:#fff;">ACA UZB AS</div>
<div class="t b" style="left:1177.5px;top:123.1px;font-size:10.5px;transform:scaleX(0.9221);color:#fff;">ACA UZB AS</div>
<div class="t" style="left:1057.4px;top:210.8px;font-size:8.5px;transform:scaleX(0.9969);color:#fff;">OECD ACN olga savr...</div>
<div class="t" style="left:1168.2px;top:210.8px;font-size:8.5px;transform:scaleX(0.9953);color:#fff;">Rusudan Mikhelidze ...</div>
<div class="t" style="left:1057.4px;top:274.8px;font-size:8.5px;transform:scaleX(0.9170);color:#fff;">Jolita VASILIAUSKAITE</div>
<div class="t" style="left:1168.2px;top:274.8px;font-size:8.5px;transform:scaleX(1.0307);color:#fff;">Maris Urbans</div>
<div class="t" style="left:1057.4px;top:338.8px;font-size:8.5px;transform:scaleX(1.0082);color:#fff;">Vladimir Rusnac</div>
<div class="t" style="left:1168.2px;top:338.8px;font-size:8.5px;transform:scaleX(1.0117);color:#fff;">Nil Duca</div>
<div class="t b" style="left:1187.5px;top:315.1px;font-size:10.5px;transform:scaleX(0.9282);color:#fff;">Nil Duca</div>
<div class="t" style="left:1057.4px;top:402.8px;font-size:8.5px;transform:scaleX(0.9961);color:#fff;">Uzbekistan ACA Zohi...</div>
<div class="t" style="left:1156.0px;top:402.8px;font-size:8.5px;transform:scaleX(1.0109);color:#fff;">Armenia-Hasmik Tigrany...</div>
<div class="t" style="left:1057.4px;top:466.8px;font-size:8.5px;transform:scaleX(0.9816);color:#fff;">Руслан Кубаталиев</div>
<div class="t" style="left:1168.2px;top:466.8px;font-size:8.5px;transform:scaleX(0.9955);color:#fff;">Karim Musashayxov ...</div>
<div class="t" style="left:1057.4px;top:530.8px;font-size:8.5px;transform:scaleX(1.0133);color:#fff;">Nijat Naghiyev/Azerb...</div>
<div class="t" style="left:1168.2px;top:530.8px;font-size:8.5px;transform:scaleX(1.0385);color:#fff;">Republic of Moldova ...</div>
<div class="t b" style="left:1164.2px;top:507.1px;font-size:10.5px;transform:scaleX(0.9175);color:#fff;">Republic  of  Mol...</div>
<div class="t" style="left:1057.4px;top:594.8px;font-size:8.5px;transform:scaleX(0.9813);color:#fff;">OECD ACN Dmytro K...</div>
<div class="t" style="left:1168.2px;top:594.8px;font-size:8.5px;transform:scaleX(1.0246);color:#fff;">AC\Tajikistan\Nigora ...</div>
<div class="a" style="left:1017.500px;top:347px;width:1.500px;height:16px;background:#5a5a5a"></div>
<div class="a" style="left:1127px;top:612.500px;width:49px;height:22px;background:#111;border-radius:2px"></div>
<svg style="left:1146.500px;top:620.500px" width="9" height="5.500" viewBox="0 0 9 5.500" fill="none" stroke="#fff" stroke-width="1.100"><path d="M.500.500l4 4 4-4"/></svg>

<!-- ZOOM TOOLBAR -->
<div class="a" id="ztool"></div>
<!-- ztool -->
<svg style="left:25px;top:660px" width="18" height="18" viewBox="0 0 18 18" fill="none"><rect x="6" y="1.500" width="6" height="9.500" rx="3" fill="#a9a3a3"/><path d="M3.800 8q0 5 5.200 5t5.200-5M9 13v3M6.500 16.300h5" stroke="#a9a3a3" stroke-width="1.100"/><path d="M16.500 1L1.500 17" stroke="#d8353b" stroke-width="1.200"/></svg>
<svg style="left:57.3px;top:668px" width="5" height="3.500" viewBox="0 0 5 3.500" fill="none" stroke="#d0d0d0" stroke-width="1"><path d="M.400 3l2.100-2.300L4.600 3"/></svg>
<svg style="left:97px;top:660px" width="20" height="18" viewBox="0 0 20 18" fill="none"><rect x="1" y="4.500" width="11.500" height="10" rx="2" fill="#a9a3a3"/><path d="M13 8l5-3v9l-5-3z" fill="#a9a3a3"/><path d="M18.500 1L1.500 17" stroke="#d8353b" stroke-width="1.200"/></svg>
<svg style="left:135.5px;top:668px" width="5" height="3.500" viewBox="0 0 5 3.500" fill="none" stroke="#d0d0d0" stroke-width="1"><path d="M.400 3l2.100-2.300L4.600 3"/></svg>
<svg style="left:481px;top:663.500px" width="17" height="12" viewBox="0 0 17 12" fill="#c4c4c4"><circle cx="5.500" cy="3" r="2.800"/><path d="M0 11.500q0-5 5.500-5t5.500 5z"/><circle cx="12.200" cy="4" r="2.200"/><path d="M11.500 7q5.500-.5 5.500 4.500h-5q0-3-1.500-4z"/></svg>
<svg style="left:522.5px;top:668px" width="5" height="3.500" viewBox="0 0 5 3.500" fill="none" stroke="#d0d0d0" stroke-width="1"><path d="M.400 3l2.100-2.300L4.600 3"/></svg>
<svg style="left:555.500px;top:663px" width="15" height="13" viewBox="0 0 15 13" fill="#c4c4c4"><path d="M2.500 0h10q2.500 0 2.500 2.500v4.500q0 2.500-2.500 2.500H7l-3.500 3v-3h-1Q0 9.500 0 7V2.500Q0 0 2.500 0z"/></svg>
<svg style="left:582.0px;top:668px" width="5" height="3.500" viewBox="0 0 5 3.500" fill="none" stroke="#d0d0d0" stroke-width="1"><path d="M.400 3l2.100-2.300L4.600 3"/></svg>
<div class="a" style="left:630.500px;top:663px;width:16.500px;height:12.500px;border-radius:2.500px;background:#23d959"></div>
<svg style="left:635.500px;top:665.500px" width="7" height="7.500" viewBox="0 0 7 7.500" fill="none" stroke="#14361d" stroke-width="1.400"><path d="M3.500 7.500V1M.700 3.500L3.500.800l2.800 2.700"/></svg>
<svg style="left:709.500px;top:662px" width="13" height="14.500" viewBox="0 0 13 14.500" fill="#c4c4c4"><rect x="2" y="2" width="2" height="8" rx="1"/><rect x="4.500" y=".3" width="2" height="9" rx="1"/><rect x="7" y="1" width="2" height="9" rx="1"/><rect x="9.400" y="3" width="1.800" height="7" rx=".9"/><path d="M2 7h9.200v3q0 4.500-4.400 4.500-2.500 0-4-2.500L.2 8.500q-.5-1 .5-1.400.8-.2 1.300.6z"/></svg>
<div class="a" style="left:765.800px;top:662.500px;width:14px;height:14px;border-radius:7px;border:1.300px solid #bdbdbd"></div><div class="a" style="left:768.300px;top:665px;width:9px;height:9px;border-radius:5px;background:#b4b4b4"></div>
<div class="a" style="left:818px;top:662px;width:16px;height:16px;border-radius:8px;background:#b9b9b9"></div>
<svg style="left:876px;top:664.500px" width="12" height="11" viewBox="0 0 12 11" fill="none" stroke="#c4c4c4" stroke-width="1.200"><path d="M.600 4V2.200Q.600.600 2.200.600H5M11.400 6.500v2.300q0 1.600-1.600 1.600H6.500"/><circle cx="9.300" cy="2.300" r="1.500"/><circle cx="2.600" cy="8.400" r="1.500"/></svg>
<div class="a" style="left:1230.800px;top:667px;width:41.600px;height:17.500px;border-radius:4.500px;background:#c5272d"></div>
<div class="t" style="left:6.8px;top:677.5px;font-size:9px;transform:scaleX(0.9195);color:#d2d2d2;-webkit-text-stroke:.2px currentColor;">Включить звук</div>
<div class="t" style="left:81.8px;top:677.5px;font-size:9px;transform:scaleX(0.8743);color:#d2d2d2;-webkit-text-stroke:.2px currentColor;">Начать видео</div>
<div class="t" style="left:500px;top:661.0px;font-size:8.5px;transform:scaleX(1.0033);color:#d2d2d2;-webkit-text-stroke:.2px currentColor;">65</div>
<div class="t" style="left:470px;top:677.5px;font-size:9px;transform:scaleX(0.9023);color:#d2d2d2;-webkit-text-stroke:.2px currentColor;">Участники</div>
<div class="t" style="left:556px;top:677.5px;font-size:9px;transform:scaleX(0.8569);color:#d2d2d2;-webkit-text-stroke:.2px currentColor;">Чат</div>
<div class="t" style="left:598px;top:677.5px;font-size:9px;transform:scaleX(0.8916);color:#23d959;-webkit-text-stroke:.2px currentColor;">Демонстрация экрана</div>
<div class="t" style="left:690.8px;top:677.5px;font-size:9px;transform:scaleX(0.8986);color:#d2d2d2;-webkit-text-stroke:.2px currentColor;">Поднять руку</div>
<div class="t" style="left:759.5px;top:677.5px;font-size:9px;transform:scaleX(0.8804);color:#d2d2d2;-webkit-text-stroke:.2px currentColor;">Запись</div>
<div class="t" style="left:810.8px;top:677.5px;font-size:9px;transform:scaleX(0.8980);color:#d2d2d2;-webkit-text-stroke:.2px currentColor;">Русский</div>
<div class="t" style="left:858px;top:677.5px;font-size:9px;transform:scaleX(0.9268);color:#d2d2d2;-webkit-text-stroke:.2px currentColor;">Приложения</div>
<div class="t b" style="left:820px;top:663.0px;font-size:8.5px;transform:scaleX(0.9771);color:#2a2a2a;">RU</div>
<div class="t b" style="left:1238px;top:668.6px;font-size:9px;transform:scaleX(0.8763);color:#fff;">Выйти</div>

<!-- WINDOWS TASKBAR -->
<div class="a" id="wintask"></div>
<!-- wintask -->
<div class="a" style="left:75px;top:693px;width:34.5px;height:27px;background:#46525d;border-left:1px solid #6b7680;border-right:1px solid #6b7680"></div>
<div class="a" style="left:156px;top:693px;width:34.5px;height:27px;background:#46525d;border-left:1px solid #6b7680;border-right:1px solid #6b7680"></div>
<div class="a" style="left:197px;top:693px;width:34px;height:27px;background:#46525d;border-left:1px solid #6b7680;border-right:1px solid #6b7680"></div>
<div class="a" style="left:238px;top:693px;width:38px;height:27px;background:#46525d;border-left:1px solid #6b7680;border-right:1px solid #6b7680"></div>
<div class="a" style="left:278.8px;top:693px;width:38.19999999999999px;height:27px;background:#5d6973;border-left:1px solid #6b7680;border-right:1px solid #6b7680"></div>
<svg style="left:7.500px;top:698px" width="16.500" height="16.500" viewBox="0 0 11 11" fill="#fff"><path d="M0 1.500l4.800-.700v4.400H0zM5.400.700L11 0v5.200H5.400zM0 5.900h4.800v4.400L0 9.600zM5.400 5.900H11V11l-5.600-.800z"/></svg>
<svg style="left:45px;top:697.500px" width="19" height="19" viewBox="0 0 19 19" fill="none"><path d="M2 9.500Q2.500 2 9.800 2q7 0 7 8H6.500q.3 4 4.500 4 2.500 0 5-1.300v3.300Q13.500 17.500 10.500 17.500 3 17.500 3 10.500 3 6.500 7 4 3.500 5 2 9.500z" fill="#1e90e6"/><path d="M6.600 7.600h6.200q-.2-2.800-3-2.800-2.700 0-3.200 2.800z" fill="#1c2d39"/></svg>
<svg style="left:83px;top:698px" width="18.500" height="16.500" viewBox="0 0 16 14"><path d="M0 1.500h5.500l1.500 1.500h9v10H0z" fill="#e8a92e"/><path d="M0 5h16v8.500H0z" fill="#ffd65c"/><path d="M3.500 9.500h9v4H3.500z" fill="#3f96e4"/><path d="M5.500 11.500h5v2h-5z" fill="#ffd65c"/></svg>
<svg style="left:124px;top:698.500px" width="22" height="16" viewBox="0 0 22 16"><path d="M0 6L11 0l11 6v10H0z" fill="#fff"/><path d="M2 7.500l9 4.500 9-4.500" stroke="#1c2d39" stroke-width="1.300" fill="none"/><path d="M11 12l9-4.500-2 4z" fill="#1c2d39"/></svg>
<svg style="left:163px;top:697.500px" width="21.500" height="18.500" viewBox="0 0 17 16"><rect x="4" y="0" width="13" height="16" rx="1" fill="#41a5ee"/><rect x="4" y="4" width="13" height="4" fill="#2b7cd3"/><rect x="4" y="8" width="13" height="4" fill="#185abd"/><rect x="4" y="12" width="13" height="4" fill="#103f91"/><rect x="0" y="3.500" width="9" height="9" rx="1" fill="#185abd"/><path d="M2 6l1 4.500 1.500-4 1.500 4L7 6" stroke="#fff" fill="none" stroke-width="1"/></svg>
<div class="a" style="left:203px;top:695.500px;width:22px;height:22px;border-radius:11px;background:conic-gradient(from -60deg,#e94335 0 33.300%,#fbbc05 33.300% 66.600%,#34a853 66.600%)"></div>
<div class="a" style="left:209px;top:701.500px;width:10px;height:10px;border-radius:5px;background:#4285f4;border:1.500px solid #fff"></div>
<div class="a" style="left:215px;top:708px;width:10px;height:10px;border-radius:5px;background:#8a96a0;border:1px solid #c8d0d6"></div>
<svg style="left:247px;top:697px" width="21" height="20" viewBox="0 0 21 20"><rect x="1" y="1" width="19" height="6" rx="1" fill="#8e3a8e"/><rect x="1" y="7" width="19" height="6" rx="1" fill="#3c6fc4"/><rect x="1" y="13" width="19" height="6" rx="1" fill="#3f9d4a"/><path d="M1 4h19M1 10h19M1 16h19" stroke="#e8d36a" stroke-width="1"/><rect x="8.500" y="0" width="4" height="20" fill="#6e6e6e"/><rect x="9" y="8" width="3" height="4" fill="#d9c15a"/></svg>
<div class="a" style="left:288px;top:696px;width:21px;height:21px;border-radius:11px;background:#4a8cff"></div>
<svg style="left:292.500px;top:702.500px" width="12" height="8" viewBox="0 0 12 8" fill="#fff"><rect width="8" height="8" rx="1.800"/><path d="M8.500 3L12 .8v6.400L8.500 5z"/></svg>
<svg style="left:1017.500px;top:705px" width="6" height="3.500" viewBox="0 0 6 3.500"><path d="M0 3.500L3 0l3 3.500z" fill="#fff"/></svg>
<svg style="left:1032px;top:700.500px" width="9" height="12" viewBox="0 0 9 12" fill="none"><rect x="2" y="0" width="5" height="8" rx="2.500" fill="#e6e6e6"/><path d="M.500 6q0 4 4 4t4-4M4.500 10v2" stroke="#bbb" stroke-width="1"/></svg>
<div class="a" style="left:1047px;top:704px;width:7px;height:8px;background:#d8c25a"></div><div class="a" style="left:1052px;top:700.500px;width:6px;height:8px;background:#3b6fd1;border:1px solid #dfe6f5"></div>
<svg style="left:1063px;top:700.500px" width="12" height="12" viewBox="0 0 12 12"><path d="M6 0l6 1.500v4Q12 10 6 12 0 10 0 5.500v-4z" fill="#2e9a3a"/><path d="M3 4l1.500 4L6 5l1.500 3L9 4" stroke="#d7f5d4" stroke-width="1" fill="none"/></svg>
<div class="a" style="left:1079px;top:701.400px;width:11px;height:11px;background:#fff"></div>
<div class="a" style="left:1095px;top:700.500px;width:11.500px;height:11.500px;border-radius:6px;background:#1fb6d6"></div><div class="a" style="left:1098px;top:705.500px;width:6px;height:1.500px;background:#dff6fb;transform:rotate(-35deg)"></div>
<svg style="left:1112.500px;top:700px" width="9" height="13" viewBox="0 0 9 13" fill="none" stroke="#e8e8e8" stroke-width="1"><rect x="1.500" y=".5" width="4" height="3"/><rect x=".5" y="3.500" width="6" height="8.500" rx="1"/><path d="M6.500 9q2 0 2 2.500" /></svg>
<div class="a" style="left:1128px;top:700px;width:9px;height:13px;border-radius:4.500px;background:#1672d8"></div>
<svg style="left:1130px;top:702px" width="5" height="9" viewBox="0 0 5 9" fill="none" stroke="#fff" stroke-width=".9"><path d="M.300 2.500l4 4-2 2v-8l2 2-4 4"/></svg>
<svg style="left:1143px;top:701px" width="12" height="11" viewBox="0 0 12 11" fill="none" stroke="#e8e8e8" stroke-width="1"><rect x="2.500" y=".5" width="9" height="6"/><path d="M7 6.500v2.500M4.500 9.500h5M.500 4.500v6h3"/></svg>
<svg style="left:1159px;top:701px" width="12" height="11" viewBox="0 0 12 11" fill="none" stroke="#e8e8e8" stroke-width="1"><path d="M.500 4h2l3-3v9l-3-3h-2z"/><path d="M7.300 3.500q1.200 2 0 4M9 2q2.300 3.500 0 7M10.700.8q3 4.700 0 9.400" stroke-width=".9"/></svg>
<svg style="left:1248px;top:701px" width="11" height="11" viewBox="0 0 11 11"><path d="M0 0h11v8.500H4.500L2.500 10.800V8.500H0z" fill="#fff"/><path d="M2 2.500h7M2 4.500h7M2 6.500h5" stroke="#1c2a44" stroke-width=".8"/></svg>
<div class="a" style="left:1254.500px;top:708px;width:9px;height:9px;border-radius:5px;background:#3a3f48;border:1px solid #aeb3ba"></div>
<div class="t" style="left:1177px;top:699.0px;font-size:8.8px;transform:scaleX(0.8689);color:#fff;">ЎЗБ</div>
<div class="t" style="left:1210px;top:693.8px;font-size:8.8px;transform:scaleX(0.7722);color:#fff;">14:47</div>
<div class="t" style="left:1201.3px;top:705.4px;font-size:8.8px;transform:scaleX(0.8017);color:#fff;">10.02.2023</div>
<div class="t b" style="left:1080px;top:699.8px;font-size:7px;transform:scaleX(1.1543);color:#111;">10</div>
<div class="t b" style="left:1257.3px;top:705.6px;font-size:6px;transform:scaleX(1.1065);color:#fff;">1</div>

</body>
</html>
